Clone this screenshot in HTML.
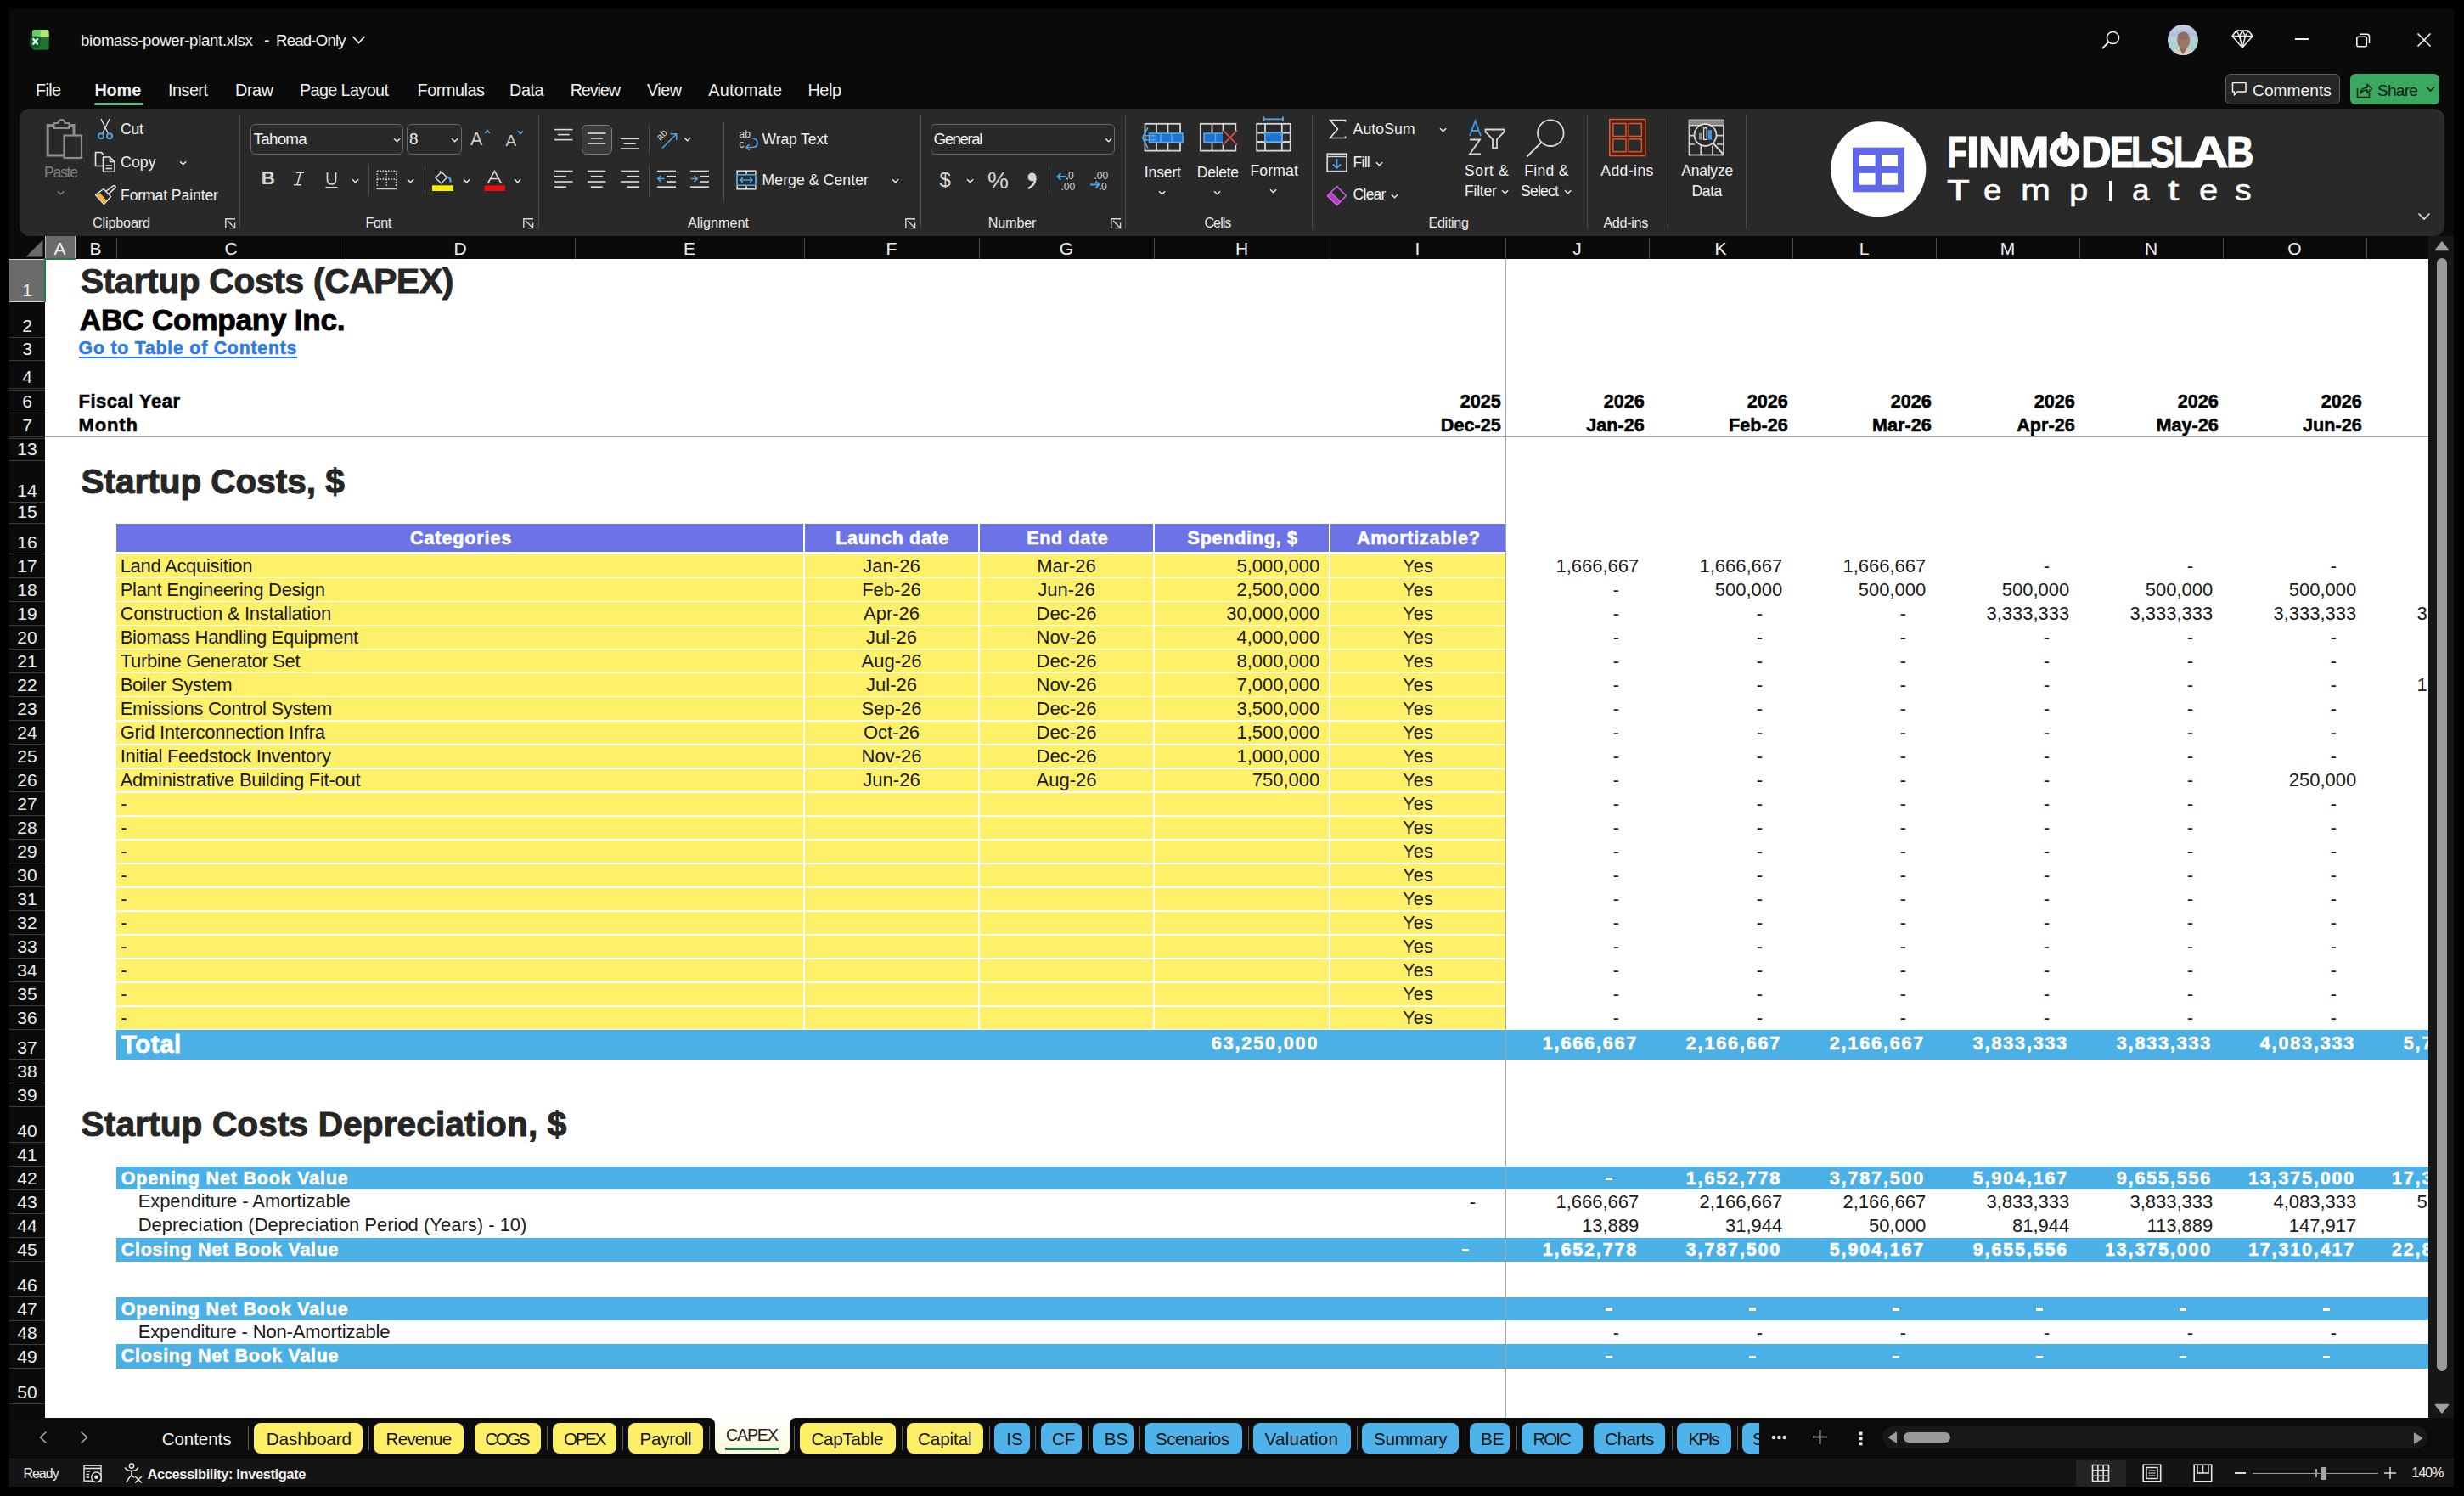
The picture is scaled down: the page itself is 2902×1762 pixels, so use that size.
<!DOCTYPE html><html><head><meta charset="utf-8"><style>
html,body{margin:0;padding:0;width:2902px;height:1762px;overflow:hidden;background:#000;}
body{position:relative;font-family:"Liberation Sans",sans-serif;}
div,svg{position:absolute;box-sizing:border-box;}
.t{white-space:nowrap;}
</style></head><body>
<div style="left:11.00px;top:11.00px;width:2879.00px;height:1740.00px;background:#0a0a0a;"></div>
<svg style="left:34.00px;top:34.00px;" width="26" height="26" viewBox="0 0 26 26">
<defs><clipPath id="xb"><rect x="3.9" y="0.9" width="19.9" height="23.8" rx="3"/></clipPath></defs>
<g clip-path="url(#xb)">
<rect x="3.9" y="0.9" width="20" height="24" fill="#21752f"/>
<rect x="3.9" y="0.9" width="9.4" height="8.6" fill="#62cd60"/>
<rect x="13.3" y="0.9" width="10.5" height="8.6" fill="#b6e772"/>
</g>
<rect x="1.2" y="8.7" width="12.7" height="13" rx="4" fill="#0d5a30"/>
<path d="M4.6 11.3 L10.6 18.4 M10.6 11.3 L4.6 18.4" stroke="#f4fff4" stroke-width="2.4"/>
</svg>
<div class="t" style="left:95.00px;top:38.69px;font-size:18.60px;line-height:18.60px;color:#f2f2f2;letter-spacing:-0.298px;">biomass-power-plant.xlsx</div>
<div class="t" style="left:311.00px;top:37.92px;font-size:19.50px;line-height:19.50px;color:#f2f2f2;">-</div>
<div class="t" style="left:325.00px;top:38.69px;font-size:18.60px;line-height:18.60px;color:#f2f2f2;letter-spacing:-0.776px;">Read-Only</div>
<svg style="left:414.00px;top:41.00px;" width="17" height="12" viewBox="0 0 17 12"><path d="M1.5 2 L8.5 9.5 L15.5 2" fill="none" stroke="#f2f2f2" stroke-width="1.8"/></svg>
<svg style="left:2474.00px;top:35.00px;" width="24" height="24" viewBox="0 0 24 24"><circle cx="14.5" cy="9.5" r="7" fill="none" stroke="#f0f0f0" stroke-width="1.6"/><path d="M9.5 14.5 L2 22" stroke="#f0f0f0" stroke-width="1.8"/></svg>
<svg style="left:2553.00px;top:29.00px;" width="36" height="36" viewBox="0 0 36 36"><defs><clipPath id="av"><circle cx="18" cy="18" r="18"/></clipPath>
<linearGradient id="avg" x1="0" y1="0" x2="0" y2="1"><stop offset="0" stop-color="#c9d2e6"/><stop offset="0.32" stop-color="#aebfd8"/><stop offset="0.42" stop-color="#b4d4d6"/><stop offset="1" stop-color="#a6cfcb"/></linearGradient></defs>
<g clip-path="url(#av)"><rect width="36" height="36" fill="url(#avg)"/>
<path d="M2 36 Q5 29 14 28.5 L22 28.5 Q31 29 34 36 Z" fill="#d6ccc3"/>
<path d="M13.5 28 L18 35 L22.5 28 Z" fill="#8a6a5a"/>
<ellipse cx="18.7" cy="18.5" rx="7.6" ry="10.3" fill="#9d7566"/>
<ellipse cx="18" cy="13.5" rx="6.2" ry="4.5" fill="#8f6d62"/></g></svg>
<svg style="left:2628.00px;top:34.00px;" width="26" height="24" viewBox="0 0 26 24"><path d="M6 2 L20 2 L25 8.5 L13 22 L1 8.5 Z M1 8.5 L25 8.5 M6 2 L9.5 8.5 L13 22 L16.5 8.5 L20 2 M9.5 8.5 L13 2 L16.5 8.5" fill="none" stroke="#f0f0f0" stroke-width="1.5" stroke-linejoin="round"/></svg>
<div style="left:2703.00px;top:45.00px;width:16.00px;height:1.60px;background:#f0f0f0;"></div>
<svg style="left:2774.00px;top:38.00px;" width="19" height="19" viewBox="0 0 19 19"><rect x="1.8" y="5.2" width="11.5" height="11.5" rx="2" fill="none" stroke="#f0f0f0" stroke-width="1.6"/><path d="M5.2 2.2 L13.5 2.2 Q16.5 2.2 16.5 5.2 L16.5 13" fill="none" stroke="#f0f0f0" stroke-width="1.6"/></svg>
<svg style="left:2846.00px;top:38.00px;" width="18" height="18" viewBox="0 0 18 18"><path d="M1.5 1.5 L16.5 16.5 M16.5 1.5 L1.5 16.5" stroke="#f0f0f0" stroke-width="1.7"/></svg>
<div style="left:2621px;top:87px;width:135px;height:36px;border:1px solid #5c5c5c;border-radius:6px;background:#262626"></div>
<svg style="left:2628.00px;top:96.00px;" width="19" height="19" viewBox="0 0 19 19"><path d="M1.5 1.5 H17 V12 H7 L3.5 16 V12 H1.5 Z" fill="none" stroke="#f0f0f0" stroke-width="1.5" stroke-linejoin="round"/></svg>
<div class="t" style="left:2653.00px;top:96.68px;font-size:19.20px;line-height:19.20px;color:#f2f2f2;letter-spacing:0.025px;">Comments</div>
<div style="left:2768px;top:87px;width:105px;height:36px;border-radius:6px;background:#3aa860"></div>
<svg style="left:2775.00px;top:96.00px;" width="20" height="20" viewBox="0 0 20 20"><path d="M1.5 8 V18.5 H15.5 V14" fill="none" stroke="#0d2a17" stroke-width="1.6"/><path d="M5 14 Q6 7 13 7 V3.2 L18.5 8.5 L13 13.6 V10 Q8 10 5 14 Z" fill="none" stroke="#0d2a17" stroke-width="1.5" stroke-linejoin="round"/></svg>
<div class="t" style="left:2800.00px;top:96.68px;font-size:19.20px;line-height:19.20px;color:#0d1f14;letter-spacing:-0.809px;">Share</div>
<svg style="left:2857.00px;top:101.00px;" width="11" height="8" viewBox="0 0 11 8"><path d="M1 1.5 L5.5 6 L10 1.5" fill="none" stroke="#0d1f14" stroke-width="1.6"/></svg>
<div class="t" style="left:42.00px;top:97.07px;font-size:19.80px;line-height:19.80px;color:#f0f0f0;letter-spacing:-0.635px;">File</div>
<div class="t" style="left:111.40px;top:97.07px;font-size:19.80px;line-height:19.80px;color:#f0f0f0;font-weight:bold;letter-spacing:-0.071px;">Home</div>
<div class="t" style="left:198.00px;top:97.07px;font-size:19.80px;line-height:19.80px;color:#f0f0f0;letter-spacing:-0.504px;">Insert</div>
<div class="t" style="left:277.00px;top:97.07px;font-size:19.80px;line-height:19.80px;color:#f0f0f0;letter-spacing:-0.402px;">Draw</div>
<div class="t" style="left:353.00px;top:97.07px;font-size:19.80px;line-height:19.80px;color:#f0f0f0;letter-spacing:-0.619px;">Page Layout</div>
<div class="t" style="left:491.50px;top:97.07px;font-size:19.80px;line-height:19.80px;color:#f0f0f0;letter-spacing:-0.431px;">Formulas</div>
<div class="t" style="left:600.00px;top:97.07px;font-size:19.80px;line-height:19.80px;color:#f0f0f0;letter-spacing:-0.408px;">Data</div>
<div class="t" style="left:671.70px;top:97.07px;font-size:19.80px;line-height:19.80px;color:#f0f0f0;letter-spacing:-1.124px;">Review</div>
<div class="t" style="left:762.00px;top:97.07px;font-size:19.80px;line-height:19.80px;color:#f0f0f0;letter-spacing:-0.520px;">View</div>
<div class="t" style="left:834.30px;top:97.07px;font-size:19.80px;line-height:19.80px;color:#f0f0f0;letter-spacing:0.278px;">Automate</div>
<div class="t" style="left:951.40px;top:97.07px;font-size:19.80px;line-height:19.80px;color:#f0f0f0;letter-spacing:-0.374px;">Help</div>
<div style="left:111px;top:120.5px;width:58px;height:3px;border-radius:2px;background:#5ab77f"></div>
<div style="left:23px;top:128px;width:2856px;height:150px;border-radius:12px;background:#292929"></div>
<div style="left:282.00px;top:135.00px;width:1.00px;height:134.00px;background:#4a4a4a;"></div>
<div style="left:633.50px;top:135.00px;width:1.00px;height:134.00px;background:#4a4a4a;"></div>
<div style="left:1083.50px;top:135.00px;width:1.00px;height:134.00px;background:#4a4a4a;"></div>
<div style="left:1325.30px;top:135.00px;width:1.00px;height:134.00px;background:#4a4a4a;"></div>
<div style="left:1544.60px;top:135.00px;width:1.00px;height:134.00px;background:#4a4a4a;"></div>
<div style="left:1868.50px;top:135.00px;width:1.00px;height:134.00px;background:#4a4a4a;"></div>
<div style="left:1963.50px;top:135.00px;width:1.00px;height:134.00px;background:#4a4a4a;"></div>
<div style="left:2056.40px;top:135.00px;width:1.00px;height:134.00px;background:#4a4a4a;"></div>
<div class="t" style="left:109.00px;top:254.43px;font-size:16.20px;line-height:16.20px;color:#e8e8e8;letter-spacing:-0.168px;">Clipboard</div>
<div class="t" style="left:430.50px;top:254.43px;font-size:16.20px;line-height:16.20px;color:#e8e8e8;letter-spacing:-0.572px;">Font</div>
<div class="t" style="left:810.00px;top:254.43px;font-size:16.20px;line-height:16.20px;color:#e8e8e8;">Alignment</div>
<div class="t" style="left:1163.80px;top:254.43px;font-size:16.20px;line-height:16.20px;color:#e8e8e8;letter-spacing:-0.184px;">Number</div>
<div class="t" style="left:1418.40px;top:254.43px;font-size:16.20px;line-height:16.20px;color:#e8e8e8;letter-spacing:-0.977px;">Cells</div>
<div class="t" style="left:1682.50px;top:254.43px;font-size:16.20px;line-height:16.20px;color:#e8e8e8;letter-spacing:-0.339px;">Editing</div>
<div class="t" style="left:1888.40px;top:254.43px;font-size:16.20px;line-height:16.20px;color:#e8e8e8;letter-spacing:-0.338px;">Add-ins</div>
<svg style="left:264.60px;top:257.00px;" width="13" height="13" viewBox="0 0 13 13"><path d="M0.8 12 V0.8 H12 M3 3 L11.5 11.5 M5.5 11.6 H11.6 V5.5" fill="none" stroke="#d8d8d8" stroke-width="1.4"/></svg>
<svg style="left:616.00px;top:257.00px;" width="13" height="13" viewBox="0 0 13 13"><path d="M0.8 12 V0.8 H12 M3 3 L11.5 11.5 M5.5 11.6 H11.6 V5.5" fill="none" stroke="#d8d8d8" stroke-width="1.4"/></svg>
<svg style="left:1066.00px;top:257.00px;" width="13" height="13" viewBox="0 0 13 13"><path d="M0.8 12 V0.8 H12 M3 3 L11.5 11.5 M5.5 11.6 H11.6 V5.5" fill="none" stroke="#d8d8d8" stroke-width="1.4"/></svg>
<svg style="left:1308.00px;top:257.00px;" width="13" height="13" viewBox="0 0 13 13"><path d="M0.8 12 V0.8 H12 M3 3 L11.5 11.5 M5.5 11.6 H11.6 V5.5" fill="none" stroke="#d8d8d8" stroke-width="1.4"/></svg>
<svg style="left:2847.00px;top:250.00px;" width="16" height="10" viewBox="0 0 16 10"><path d="M1.5 1.5 L8 8 L14.5 1.5" fill="none" stroke="#e0e0e0" stroke-width="1.6"/></svg>
<svg style="left:54.00px;top:140.00px;" width="44" height="48" viewBox="0 0 44 48">
<path d="M9 7.5 H2.2 V43 H21" fill="none" stroke="#8e8e8e" stroke-width="3"/>
<path d="M27 7.5 H33 V19" fill="none" stroke="#8e8e8e" stroke-width="3"/>
<path d="M9.5 11 V5 H14.5 Q15 1.2 18.5 1.2 Q22 1.2 22.5 5 H27.5 V11 Z" fill="none" stroke="#8e8e8e" stroke-width="2.2" stroke-linejoin="round"/>
<rect x="21.5" y="19.5" width="20.5" height="26.5" fill="none" stroke="#8e8e8e" stroke-width="2.2"/>
</svg>
<div class="t" style="left:52.00px;top:194.64px;font-size:17.60px;line-height:17.60px;color:#7f7f7f;letter-spacing:-1.252px;">Paste</div>
<svg style="left:67.00px;top:224.00px;" width="10" height="6.5" viewBox="0 0 10 6.5"><path d="M1 1.2 L4.6 4.8 L8.2 1.2" fill="none" stroke="#7f7f7f" stroke-width="1.5"/></svg>
<svg style="left:114.00px;top:139.00px;" width="20" height="26" viewBox="0 0 20 26">
<path d="M5 1 L13.5 18.5 M15 1 L6.5 18.5" stroke="#e6e6e6" stroke-width="1.3" fill="none"/>
<circle cx="5" cy="21.3" r="3" fill="none" stroke="#4ba3e3" stroke-width="1.9"/>
<circle cx="15" cy="21.3" r="3" fill="none" stroke="#4ba3e3" stroke-width="1.9"/>
</svg>
<div class="t" style="left:142.00px;top:144.04px;font-size:17.60px;line-height:17.60px;color:#f0f0f0;letter-spacing:-0.194px;">Cut</div>
<svg style="left:111.00px;top:178.00px;" width="26" height="26" viewBox="0 0 26 26">
<path d="M10 17.5 H1.5 V1.5 H8.5 L11 4.5" fill="none" stroke="#e6e6e6" stroke-width="1.6" stroke-linejoin="round"/>
<path d="M10.5 24.2 V7 H18.5 L24 12.5 V24.2 Z M18.5 7 V12.5 H24" fill="none" stroke="#e6e6e6" stroke-width="1.6" stroke-linejoin="round"/>
<path d="M13.5 17 H21 M13.5 20.5 H21" stroke="#e6e6e6" stroke-width="1.3"/>
</svg>
<div class="t" style="left:142.00px;top:183.04px;font-size:17.60px;line-height:17.60px;color:#f0f0f0;letter-spacing:0.171px;">Copy</div>
<svg style="left:210.50px;top:189.00px;" width="10" height="6.5" viewBox="0 0 10 6.5"><path d="M1 1.2 L4.6 4.8 L8.2 1.2" fill="none" stroke="#e8e8e8" stroke-width="1.5"/></svg>
<svg style="left:111.00px;top:217.00px;" width="27" height="25" viewBox="0 0 27 25">
<path d="M1.5 12.5 L11 5.5 L19.5 14.5 L11.5 23.5 Z" fill="none" stroke="#e6e6e6" stroke-width="1.4" stroke-linejoin="round"/>
<path d="M2.3 13 L6.5 10 L15 19.5 L11.5 22.8 Z" fill="#f3b436"/>
<path d="M13.5 8.5 L22.5 1.8 Q25 1.2 25.2 3.6 L17 11.5" fill="none" stroke="#e6e6e6" stroke-width="1.5" stroke-linejoin="round"/>
</svg>
<div class="t" style="left:142.00px;top:222.04px;font-size:17.60px;line-height:17.60px;color:#f0f0f0;letter-spacing:-0.108px;">Format Painter</div>
<div style="left:295.3px;top:146.2px;width:180.2px;height:35.5px;border:1px solid #6a6a6a;border-radius:6px;"></div>
<div class="t" style="left:298.50px;top:155.02px;font-size:18.80px;line-height:18.80px;color:#f2f2f2;letter-spacing:-0.717px;">Tahoma</div>
<svg style="left:462.50px;top:161.50px;" width="10" height="6.5" viewBox="0 0 10 6.5"><path d="M1 1.2 L4.6 4.8 L8.2 1.2" fill="none" stroke="#e8e8e8" stroke-width="1.5"/></svg>
<div style="left:479.4px;top:146.2px;width:64.3px;height:35.5px;border:1px solid #6a6a6a;border-radius:6px;"></div>
<div class="t" style="left:482.00px;top:155.02px;font-size:18.80px;line-height:18.80px;color:#f2f2f2;">8</div>
<svg style="left:530.50px;top:161.50px;" width="10" height="6.5" viewBox="0 0 10 6.5"><path d="M1 1.2 L4.6 4.8 L8.2 1.2" fill="none" stroke="#e8e8e8" stroke-width="1.5"/></svg>
<div class="t" style="left:554.00px;top:153.53px;font-size:21.50px;line-height:21.50px;color:#d0d0d0;">A</div>
<svg style="left:569.50px;top:151.50px;" width="8" height="6" viewBox="0 0 8 6"><path d="M1 5 L4 1.5 L7 5" fill="none" stroke="#4ba3e3" stroke-width="1.6"/></svg>
<div class="t" style="left:595.60px;top:155.65px;font-size:19.00px;line-height:19.00px;color:#d0d0d0;">A</div>
<svg style="left:608.50px;top:152.50px;" width="8" height="6" viewBox="0 0 8 6"><path d="M1 1.2 L4 4.6 L7 1.2" fill="none" stroke="#4ba3e3" stroke-width="1.6"/></svg>
<div class="t" style="left:307.80px;top:198.84px;font-size:22.30px;line-height:22.30px;color:#d6d6d6;font-weight:bold;">B</div>
<svg style="left:345.00px;top:201.50px;" width="14" height="17" viewBox="0 0 14 17"><path d="M4 1.2 H13 M1 15.8 H10 M9 1.2 L5 15.8" fill="none" stroke="#d6d6d6" stroke-width="1.6"/></svg>
<svg style="left:382.50px;top:201.50px;" width="15" height="20" viewBox="0 0 15 20"><path d="M2.5 1 V9.5 Q2.5 15 7.5 15 Q12.5 15 12.5 9.5 V1" fill="none" stroke="#d6d6d6" stroke-width="1.7"/><path d="M0.5 18.8 H14.5" stroke="#d6d6d6" stroke-width="1.6"/></svg>
<svg style="left:414.40px;top:209.70px;" width="10" height="6.5" viewBox="0 0 10 6.5"><path d="M1 1.2 L4.6 4.8 L8.2 1.2" fill="none" stroke="#e8e8e8" stroke-width="1.5"/></svg>
<div style="left:434.40px;top:193.70px;width:1.00px;height:36.00px;background:#4a4a4a;"></div>
<svg style="left:443.00px;top:199.50px;" width="25" height="24" viewBox="0 0 25 24">
<path d="M1.2 1.2 H23.5 V20 M1.2 1.2 V20 M12.3 1.2 V20 M1.2 11 H23.5" fill="none" stroke="#d6d6d6" stroke-width="1.5" stroke-dasharray="1.6 1.6"/>
<path d="M0.5 22.3 H24" stroke="#d6d6d6" stroke-width="1.8"/>
</svg>
<svg style="left:479.40px;top:209.70px;" width="10" height="6.5" viewBox="0 0 10 6.5"><path d="M1 1.2 L4.6 4.8 L8.2 1.2" fill="none" stroke="#e8e8e8" stroke-width="1.5"/></svg>
<div style="left:499.50px;top:193.70px;width:1.00px;height:36.00px;background:#4a4a4a;"></div>
<svg style="left:508.50px;top:199.50px;" width="26" height="25.5" viewBox="0 0 26 25.5">
<path d="M4 9.5 L11 2.5 L17.5 9 L10.5 16 Z" fill="none" stroke="#d6d6d6" stroke-width="1.5" stroke-linejoin="round"/>
<path d="M9.5 5 V1" stroke="#d6d6d6" stroke-width="1.4"/>
<path d="M18 8 Q22 9.5 21.5 14.5" fill="none" stroke="#4ba3e3" stroke-width="2.4"/>
<rect x="0" y="18.3" width="25" height="6.7" fill="#f5ee00"/>
</svg>
<svg style="left:544.50px;top:209.70px;" width="10" height="6.5" viewBox="0 0 10 6.5"><path d="M1 1.2 L4.6 4.8 L8.2 1.2" fill="none" stroke="#e8e8e8" stroke-width="1.5"/></svg>
<svg style="left:569.50px;top:199.50px;" width="26" height="25.5" viewBox="0 0 26 25.5">
<path d="M4.5 16 L12.5 1.5 L20.5 16 M7.5 10.5 H17.5" fill="none" stroke="#d6d6d6" stroke-width="1.6"/>
<rect x="0.5" y="18.3" width="24.5" height="6.7" fill="#ec0c0c"/>
</svg>
<svg style="left:605.00px;top:209.70px;" width="10" height="6.5" viewBox="0 0 10 6.5"><path d="M1 1.2 L4.6 4.8 L8.2 1.2" fill="none" stroke="#e8e8e8" stroke-width="1.5"/></svg>
<svg style="left:653.30px;top:0.00px;pointer-events:none" width="23" height="260" viewBox="0 0 23 260"><rect x="0.00" y="151.80" width="21.50" height="1.6" fill="#dcdcdc"/><rect x="3.75" y="157.80" width="14.00" height="1.6" fill="#dcdcdc"/><rect x="0.00" y="163.80" width="21.50" height="1.6" fill="#dcdcdc"/></svg>
<div style="left:685.4px;top:146.5px;width:35.5px;height:35.1px;border:1px solid #7c7c7c;border-radius:6px;background:#3b3b3b"></div>
<svg style="left:692.00px;top:0.00px;pointer-events:none" width="23" height="260" viewBox="0 0 23 260"><rect x="0.00" y="156.20" width="21.50" height="1.6" fill="#dcdcdc"/><rect x="3.75" y="162.20" width="14.00" height="1.6" fill="#dcdcdc"/><rect x="0.00" y="168.20" width="21.50" height="1.6" fill="#dcdcdc"/></svg>
<svg style="left:730.80px;top:0.00px;pointer-events:none" width="23" height="260" viewBox="0 0 23 260"><rect x="0.00" y="162.50" width="21.50" height="1.6" fill="#dcdcdc"/><rect x="3.75" y="168.40" width="14.00" height="1.6" fill="#dcdcdc"/><rect x="0.00" y="174.20" width="21.50" height="1.6" fill="#dcdcdc"/></svg>
<div style="left:763.50px;top:146.50px;width:1.00px;height:35.50px;background:#4a4a4a;"></div>
<svg style="left:772.00px;top:151.00px;" width="28" height="25" viewBox="0 0 28 25">
<text x="0" y="0" transform="translate(5.5,15) rotate(-45)" font-family="Liberation Sans" font-size="11.5" fill="#d6d6d6">ab</text>
<path d="M8 23.5 L24.5 7" stroke="#4ba3e3" stroke-width="1.6"/>
<path d="M17.5 6.8 H24.8 V14" fill="none" stroke="#4ba3e3" stroke-width="1.6"/>
</svg>
<svg style="left:805.30px;top:161.40px;" width="10" height="6.5" viewBox="0 0 10 6.5"><path d="M1 1.2 L4.6 4.8 L8.2 1.2" fill="none" stroke="#e8e8e8" stroke-width="1.5"/></svg>
<svg style="left:653.30px;top:0.00px;pointer-events:none" width="23" height="260" viewBox="0 0 23 260"><rect x="0.00" y="200.70" width="21.50" height="1.6" fill="#dcdcdc"/><rect x="0.00" y="206.90" width="14.00" height="1.6" fill="#dcdcdc"/><rect x="0.00" y="213.20" width="21.50" height="1.6" fill="#dcdcdc"/><rect x="0.00" y="219.40" width="14.00" height="1.6" fill="#dcdcdc"/></svg>
<svg style="left:692.00px;top:0.00px;pointer-events:none" width="23" height="260" viewBox="0 0 23 260"><rect x="0.00" y="200.70" width="21.50" height="1.6" fill="#dcdcdc"/><rect x="3.75" y="206.90" width="14.00" height="1.6" fill="#dcdcdc"/><rect x="0.00" y="213.20" width="21.50" height="1.6" fill="#dcdcdc"/><rect x="3.75" y="219.40" width="14.00" height="1.6" fill="#dcdcdc"/></svg>
<svg style="left:730.80px;top:0.00px;pointer-events:none" width="23" height="260" viewBox="0 0 23 260"><rect x="0.00" y="200.70" width="21.50" height="1.6" fill="#dcdcdc"/><rect x="7.50" y="206.90" width="14.00" height="1.6" fill="#dcdcdc"/><rect x="0.00" y="213.20" width="21.50" height="1.6" fill="#dcdcdc"/><rect x="7.50" y="219.40" width="14.00" height="1.6" fill="#dcdcdc"/></svg>
<div style="left:763.50px;top:194.00px;width:1.00px;height:36.50px;background:#4a4a4a;"></div>
<svg style="left:773.00px;top:199.00px;" width="24" height="24" viewBox="0 0 24 24">
<rect x="1" y="1.7" width="22" height="1.6" fill="#dcdcdc"/><rect x="12" y="7.9" width="11" height="1.6" fill="#dcdcdc"/>
<rect x="12" y="14.2" width="11" height="1.6" fill="#dcdcdc"/><rect x="1" y="20.4" width="22" height="1.6" fill="#dcdcdc"/>
<path d="M2 11.5 H9.5 M5.5 7.8 L1.8 11.5 L5.5 15.2" fill="none" stroke="#4ba3e3" stroke-width="1.7"/>
</svg>
<svg style="left:812.00px;top:199.00px;" width="24" height="24" viewBox="0 0 24 24">
<rect x="1" y="1.7" width="22" height="1.6" fill="#dcdcdc"/><rect x="12" y="7.9" width="11" height="1.6" fill="#dcdcdc"/>
<rect x="12" y="14.2" width="11" height="1.6" fill="#dcdcdc"/><rect x="1" y="20.4" width="22" height="1.6" fill="#dcdcdc"/>
<path d="M1.5 11.5 H9 M5.5 7.8 L9.2 11.5 L5.5 15.2" fill="none" stroke="#4ba3e3" stroke-width="1.7"/>
</svg>
<div style="left:851.60px;top:143.70px;width:1.00px;height:94.30px;background:#4a4a4a;"></div>
<svg style="left:869.50px;top:152.00px;" width="24" height="25" viewBox="0 0 24 25">
<text x="0.5" y="10" font-family="Liberation Sans" font-size="12" fill="#d6d6d6">ab</text>
<text x="0.5" y="22" font-family="Liberation Sans" font-size="12" fill="#d6d6d6">c</text>
<path d="M16 11 Q22 11 22 16.5 Q22 21.5 16 21.5 H9" fill="none" stroke="#4ba3e3" stroke-width="1.7"/>
<path d="M12.5 18 L9 21.5 L12.5 25" fill="none" stroke="#4ba3e3" stroke-width="1.7"/>
</svg>
<div class="t" style="left:897.50px;top:155.74px;font-size:17.60px;line-height:17.60px;color:#f0f0f0;letter-spacing:-0.135px;">Wrap Text</div>
<svg style="left:866.50px;top:199.50px;" width="24" height="24" viewBox="0 0 24 24">
<rect x="1.2" y="1.2" width="21.6" height="21.6" fill="none" stroke="#d6d6d6" stroke-width="1.6"/>
<path d="M12 1.2 V5.5 M12 18.5 V22.8" stroke="#d6d6d6" stroke-width="1.6"/>
<rect x="1.2" y="5.8" width="21.6" height="12.4" fill="none" stroke="#4ba3e3" stroke-width="1.6"/>
<path d="M5 12 H19 M8 9 L5 12 L8 15 M16 9 L19 12 L16 15" fill="none" stroke="#4ba3e3" stroke-width="1.5"/>
</svg>
<div class="t" style="left:897.50px;top:204.34px;font-size:17.60px;line-height:17.60px;color:#f0f0f0;letter-spacing:0.097px;">Merge &amp; Center</div>
<svg style="left:1049.50px;top:210.00px;" width="10" height="6.5" viewBox="0 0 10 6.5"><path d="M1 1.2 L4.6 4.8 L8.2 1.2" fill="none" stroke="#e8e8e8" stroke-width="1.5"/></svg>
<div style="left:1096.4px;top:146.4px;width:217.1px;height:35.3px;border:1px solid #6a6a6a;border-radius:6px;"></div>
<div class="t" style="left:1099.60px;top:155.02px;font-size:18.80px;line-height:18.80px;color:#f2f2f2;letter-spacing:-1.514px;">General</div>
<svg style="left:1300.50px;top:161.50px;" width="10" height="6.5" viewBox="0 0 10 6.5"><path d="M1 1.2 L4.6 4.8 L8.2 1.2" fill="none" stroke="#e8e8e8" stroke-width="1.5"/></svg>
<div class="t" style="left:1106.50px;top:200.10px;font-size:24.00px;line-height:24.00px;color:#d6d6d6;">$</div>
<svg style="left:1138.00px;top:210.00px;" width="10" height="6.5" viewBox="0 0 10 6.5"><path d="M1 1.2 L4.6 4.8 L8.2 1.2" fill="none" stroke="#e8e8e8" stroke-width="1.5"/></svg>
<div class="t" style="left:1163.00px;top:199.10px;font-size:28.00px;line-height:28.00px;color:#d6d6d6;">%</div>
<svg style="left:1208.00px;top:202.00px;" width="14" height="21" viewBox="0 0 14 21"><circle cx="7.5" cy="6.5" r="5" fill="#d6d6d6"/><path d="M11.5 8 Q11 16 3 20" fill="none" stroke="#d6d6d6" stroke-width="2.6"/></svg>
<div style="left:1235.40px;top:193.50px;width:1.00px;height:36.50px;background:#4a4a4a;"></div>
<svg style="left:1244.00px;top:199.50px;" width="26" height="25" viewBox="0 0 26 25">
<path d="M1.5 8 H12 M5.5 4 L1.5 8 L5.5 12" fill="none" stroke="#4ba3e3" stroke-width="1.8"/>
<text x="14" y="11" font-family="Liberation Sans" font-size="12" fill="#d6d6d6">0</text>
<text x="5.5" y="23.5" font-family="Liberation Sans" font-size="12" fill="#d6d6d6">.00</text>
<circle cx="13" cy="10.5" r="1" fill="#d6d6d6"/>
</svg>
<svg style="left:1282.50px;top:199.50px;" width="26" height="25" viewBox="0 0 26 25">
<text x="5.5" y="11" font-family="Liberation Sans" font-size="12" fill="#d6d6d6">.00</text>
<path d="M1 17.5 H11.5 M7.5 13.5 L11.5 17.5 L7.5 21.5" fill="none" stroke="#4ba3e3" stroke-width="1.8"/>
<text x="14" y="23.5" font-family="Liberation Sans" font-size="12" fill="#d6d6d6">0</text>
<circle cx="13" cy="22.5" r="1" fill="#d6d6d6"/>
</svg>
<svg style="left:1343.00px;top:144.00px;" width="52" height="36" viewBox="0 0 52 36">
<rect x="5.5" y="1.8" width="41.5" height="31.8" fill="none" stroke="#d8d8d8" stroke-width="1.8"/>
<path d="M19 1.8 V33.6 M32.5 1.8 V33.6" stroke="#d8d8d8" stroke-width="1.8"/>
<rect x="10.5" y="13" width="39.5" height="10.5" fill="#1f73cf" stroke="#53a9f0" stroke-width="1.6"/>
<path d="M24 13 V23.5 M37 13 V23.5" stroke="#53a9f0" stroke-width="1.4"/>
<path d="M9 6 L2.5 18.2 L9 30.5 M3 15.8 H18 M3 20.7 H18" fill="none" stroke="#53a9f0" stroke-width="1.6"/>
</svg>
<div class="t" style="left:1347.80px;top:195.04px;font-size:17.60px;line-height:17.60px;color:#f0f0f0;letter-spacing:-0.164px;">Insert</div>
<svg style="left:1363.50px;top:224.00px;" width="10" height="6.5" viewBox="0 0 10 6.5"><path d="M1 1.2 L4.6 4.8 L8.2 1.2" fill="none" stroke="#e8e8e8" stroke-width="1.5"/></svg>
<svg style="left:1411.00px;top:144.00px;" width="48" height="36" viewBox="0 0 48 36">
<rect x="2.8" y="1.8" width="41.5" height="31.8" fill="none" stroke="#d8d8d8" stroke-width="1.8"/>
<path d="M16.5 1.8 V33.6 M29.5 1.8 V33.6" stroke="#d8d8d8" stroke-width="1.8"/>
<path d="M7 13 H32 L37 18.2 L32 23.5 H7 Z" fill="#1f73cf" stroke="#53a9f0" stroke-width="1.6"/>
<path d="M20.5 13 V23.5" stroke="#53a9f0" stroke-width="1.4"/>
<rect x="29" y="10" width="17" height="17" fill="#2b2b2b"/>
<path d="M29.5 9.5 L46 26.5 M46 9.5 L29.5 26.5" stroke="#e8504f" stroke-width="1.7"/>
</svg>
<div class="t" style="left:1409.80px;top:195.04px;font-size:17.60px;line-height:17.60px;color:#f0f0f0;letter-spacing:-0.335px;">Delete</div>
<svg style="left:1428.80px;top:224.00px;" width="10" height="6.5" viewBox="0 0 10 6.5"><path d="M1 1.2 L4.6 4.8 L8.2 1.2" fill="none" stroke="#e8e8e8" stroke-width="1.5"/></svg>
<svg style="left:1478.00px;top:136.00px;" width="44" height="44" viewBox="0 0 44 44">
<rect x="2.2" y="9.8" width="39.5" height="31.8" fill="none" stroke="#d8d8d8" stroke-width="1.8"/>
<path d="M12 9.8 V41.6 M31.8 9.8 V41.6 M2.2 20.5 H41.7 M2.2 31 H41.7" stroke="#d8d8d8" stroke-width="1.8"/>
<rect x="12" y="20.5" width="19.8" height="10.5" fill="#1f73cf" stroke="#53a9f0" stroke-width="1.6"/>
<path d="M10.5 4.3 H33 M10.5 1.5 V7 M33 1.5 V7" stroke="#53a9f0" stroke-width="1.8"/>
</svg>
<div class="t" style="left:1472.40px;top:193.04px;font-size:17.60px;line-height:17.60px;color:#f0f0f0;letter-spacing:0.172px;">Format</div>
<svg style="left:1495.00px;top:222.00px;" width="10" height="6.5" viewBox="0 0 10 6.5"><path d="M1 1.2 L4.6 4.8 L8.2 1.2" fill="none" stroke="#e8e8e8" stroke-width="1.5"/></svg>
<svg style="left:1565.00px;top:140.00px;" width="21" height="24" viewBox="0 0 21 24"><path d="M19.5 3.5 V1.5 H1.5 L10.5 12 L1.5 22.5 H19.5 V20.5" fill="none" stroke="#e0e0e0" stroke-width="1.7" stroke-linejoin="miter"/></svg>
<div class="t" style="left:1593.60px;top:144.04px;font-size:17.60px;line-height:17.60px;color:#f0f0f0;letter-spacing:0.101px;">AutoSum</div>
<svg style="left:1694.50px;top:150.00px;" width="10" height="6.5" viewBox="0 0 10 6.5"><path d="M1 1.2 L4.6 4.8 L8.2 1.2" fill="none" stroke="#e8e8e8" stroke-width="1.5"/></svg>
<svg style="left:1562.00px;top:179.50px;" width="26" height="23" viewBox="0 0 26 23">
<rect x="1.2" y="1.2" width="22.8" height="20.5" fill="none" stroke="#d6d6d6" stroke-width="1.7"/>
<path d="M1.2 4.5 H24" stroke="#d6d6d6" stroke-width="1.4"/>
<path d="M12.5 7 V17.5 M8 13.5 L12.5 18 L17 13.5" fill="none" stroke="#4ba3e3" stroke-width="1.8"/>
</svg>
<div class="t" style="left:1593.60px;top:183.04px;font-size:17.60px;line-height:17.60px;color:#f0f0f0;letter-spacing:-0.794px;">Fill</div>
<svg style="left:1619.80px;top:189.50px;" width="10" height="6.5" viewBox="0 0 10 6.5"><path d="M1 1.2 L4.6 4.8 L8.2 1.2" fill="none" stroke="#e8e8e8" stroke-width="1.5"/></svg>
<svg style="left:1562.00px;top:217.50px;" width="26" height="25" viewBox="0 0 26 25">
<path d="M1.5 12.5 L12.5 1.5 L23.5 12.5 L12.5 23.5 Z" fill="none" stroke="#c561d1" stroke-width="1.7" stroke-linejoin="round"/>
<path d="M1.5 12.5 L5.5 8.5 L16.5 19.5 L12.5 23.5 Z" fill="#b43cc4" stroke="#c561d1" stroke-width="1.5" stroke-linejoin="round"/>
</svg>
<div class="t" style="left:1593.60px;top:221.44px;font-size:17.60px;line-height:17.60px;color:#f0f0f0;letter-spacing:-0.790px;">Clear</div>
<svg style="left:1638.30px;top:228.00px;" width="10" height="6.5" viewBox="0 0 10 6.5"><path d="M1 1.2 L4.6 4.8 L8.2 1.2" fill="none" stroke="#e8e8e8" stroke-width="1.5"/></svg>
<svg style="left:1728.00px;top:140.00px;" width="46" height="44" viewBox="0 0 46 44">
<path d="M3 20 L9.5 2.5 L16 20 M5.3 14 H13.7" fill="none" stroke="#3d98df" stroke-width="1.9"/>
<path d="M3 24.5 H15 L3 41.5 H16" fill="none" stroke="#d8d8d8" stroke-width="1.9"/>
<path d="M21.5 12.5 H43.5 V15.5 L35 24 V34.5 H30 V24 L21.5 15.5 Z" fill="none" stroke="#d8d8d8" stroke-width="1.8" stroke-linejoin="miter"/>
</svg>
<div class="t" style="left:1725.00px;top:193.44px;font-size:17.60px;line-height:17.60px;color:#f0f0f0;letter-spacing:0.578px;">Sort &amp;</div>
<div class="t" style="left:1725.00px;top:217.04px;font-size:17.60px;line-height:17.60px;color:#f0f0f0;letter-spacing:-0.262px;">Filter</div>
<svg style="left:1768.00px;top:223.00px;" width="10" height="6.5" viewBox="0 0 10 6.5"><path d="M1 1.2 L4.6 4.8 L8.2 1.2" fill="none" stroke="#e8e8e8" stroke-width="1.5"/></svg>
<svg style="left:1796.00px;top:139.00px;" width="48" height="48" viewBox="0 0 48 48"><circle cx="30.3" cy="17.7" r="15.3" fill="none" stroke="#d8d8d8" stroke-width="1.8"/><path d="M19.5 28.5 L2.5 45.5" stroke="#d8d8d8" stroke-width="1.9"/></svg>
<div class="t" style="left:1795.20px;top:192.84px;font-size:17.60px;line-height:17.60px;color:#f0f0f0;letter-spacing:0.306px;">Find &amp;</div>
<div class="t" style="left:1791.00px;top:217.04px;font-size:17.60px;line-height:17.60px;color:#f0f0f0;letter-spacing:-0.783px;">Select</div>
<svg style="left:1842.00px;top:223.00px;" width="10" height="6.5" viewBox="0 0 10 6.5"><path d="M1 1.2 L4.6 4.8 L8.2 1.2" fill="none" stroke="#e8e8e8" stroke-width="1.5"/></svg>
<svg style="left:1893.50px;top:139.00px;" width="45" height="46" viewBox="0 0 45 46">
<rect x="1.8" y="1.5" width="42" height="43" fill="#4c1d10" stroke="#d5582f" stroke-width="1.6"/>
<rect x="5.8" y="6.5" width="15.2" height="14.9" fill="#2a2a2a" stroke="#d5582f" stroke-width="1.5"/><rect x="24.1" y="6.5" width="15.2" height="14.9" fill="#2a2a2a" stroke="#d5582f" stroke-width="1.5"/><rect x="5.8" y="24.8" width="15.2" height="14.9" fill="#2a2a2a" stroke="#d5582f" stroke-width="1.5"/><rect x="24.1" y="24.8" width="15.2" height="14.9" fill="#2a2a2a" stroke="#d5582f" stroke-width="1.5"/>
</svg>
<div class="t" style="left:1885.30px;top:192.84px;font-size:17.60px;line-height:17.60px;color:#f0f0f0;letter-spacing:0.404px;">Add-ins</div>
<svg style="left:1988.00px;top:140.00px;" width="44" height="44" viewBox="0 0 44 44">
<rect x="1.5" y="1.5" width="40.5" height="41" fill="none" stroke="#cfcfcf" stroke-width="1.8"/>
<rect x="1.5" y="1.5" width="40.5" height="5.2" fill="#8a8a8a"/>
<path d="M1.5 7.6 H42 M1.5 19.7 H8 M34 19.7 H42 M1.5 30 H8 M34 30 H42 M15.2 31.4 V42 M29 31.4 V42" stroke="#cfcfcf" stroke-width="1.7"/>
<circle cx="20.5" cy="19" r="13" fill="#2b2b2b" stroke="#d6d6d6" stroke-width="1.8"/>
<rect x="13" y="16.6" width="4" height="8" fill="#8c8c8c"/>
<rect x="18.6" y="10.8" width="3.6" height="13.6" fill="none" stroke="#e0e0e0" stroke-width="1.3"/>
<rect x="23.5" y="13" width="4.5" height="11.5" fill="#3d8fdc"/>
<path d="M29.5 28.5 L41.5 41.5" stroke="#d6d6d6" stroke-width="2"/>
</svg>
<div class="t" style="left:1980.30px;top:192.84px;font-size:17.60px;line-height:17.60px;color:#f0f0f0;letter-spacing:-0.286px;">Analyze</div>
<div class="t" style="left:1992.50px;top:217.04px;font-size:17.60px;line-height:17.60px;color:#f0f0f0;letter-spacing:-0.426px;">Data</div>
<svg style="left:2156.00px;top:142.50px;" width="113" height="113" viewBox="0 0 113 113">
<circle cx="56.3" cy="56.3" r="56" fill="#ffffff"/>
<rect x="26" y="30.7" width="61" height="52.6" fill="#5f67e8"/>
<rect x="34" y="39" width="18.6" height="13.8" fill="#fff"/>
<rect x="60" y="39" width="19" height="13.8" fill="#fff"/>
<rect x="34" y="60.9" width="18.6" height="13.8" fill="#fff"/>
<rect x="60" y="60.9" width="19" height="13.8" fill="#fff"/>
</svg>
<div class="t" style="left:2293.71px;top:154.14px;font-size:51.01px;line-height:51.01px;color:#ffffff;font-weight:bold;-webkit-text-stroke:1.2px #fff;transform:scaleX(0.7276);transform-origin:0 0;">F</div>
<div class="t" style="left:2315.96px;top:154.14px;font-size:51.01px;line-height:51.01px;color:#ffffff;font-weight:bold;-webkit-text-stroke:1.2px #fff;transform:scaleX(1.0502);transform-origin:0 0;">I</div>
<div class="t" style="left:2330.18px;top:154.14px;font-size:51.01px;line-height:51.01px;color:#ffffff;font-weight:bold;-webkit-text-stroke:1.2px #fff;transform:scaleX(1.0163);transform-origin:0 0;">N</div>
<div class="t" style="left:2364.58px;top:154.14px;font-size:51.01px;line-height:51.01px;color:#ffffff;font-weight:bold;-webkit-text-stroke:1.2px #fff;transform:scaleX(1.1492);transform-origin:0 0;">M</div>
<div class="t" style="left:2450.50px;top:154.14px;font-size:51.01px;line-height:51.01px;color:#ffffff;font-weight:bold;-webkit-text-stroke:1.2px #fff;transform:scaleX(0.9689);transform-origin:0 0;">D</div>
<div class="t" style="left:2484.75px;top:154.14px;font-size:51.01px;line-height:51.01px;color:#ffffff;font-weight:bold;-webkit-text-stroke:1.2px #fff;transform:scaleX(0.8201);transform-origin:0 0;">E</div>
<div class="t" style="left:2510.49px;top:154.14px;font-size:51.01px;line-height:51.01px;color:#ffffff;font-weight:bold;-webkit-text-stroke:1.2px #fff;transform:scaleX(0.7836);transform-origin:0 0;">L</div>
<div class="t" style="left:2531.98px;top:154.14px;font-size:51.01px;line-height:51.01px;color:#ffffff;font-weight:bold;-webkit-text-stroke:1.2px #fff;transform:scaleX(0.8474);transform-origin:0 0;">S</div>
<div class="t" style="left:2560.03px;top:154.14px;font-size:51.01px;line-height:51.01px;color:#ffffff;font-weight:bold;-webkit-text-stroke:1.2px #fff;transform:scaleX(0.8097);transform-origin:0 0;">L</div>
<div class="t" style="left:2581.25px;top:154.14px;font-size:51.01px;line-height:51.01px;color:#ffffff;font-weight:bold;-webkit-text-stroke:1.2px #fff;transform:scaleX(1.1836);transform-origin:0 0;">A</div>
<div class="t" style="left:2621.73px;top:154.14px;font-size:51.01px;line-height:51.01px;color:#ffffff;font-weight:bold;-webkit-text-stroke:1.2px #fff;transform:scaleX(0.8806);transform-origin:0 0;">B</div>
<svg style="left:2410.00px;top:150.00px;" width="44" height="52" viewBox="0 0 44 52">
<path d="M 25.5 16.5 A 13.2 13.2 0 1 1 17.5 16.5" fill="none" stroke="#fff" stroke-width="9"/>
<rect x="16.6" y="4.8" width="9" height="27" rx="4.5" fill="#fff"/>
</svg>
<div class="t" style="left:2293.16px;top:207.28px;font-size:34.50px;line-height:34.50px;color:#ffffff;-webkit-text-stroke:0.5px #fff;transform:scaleX(1.2710);transform-origin:0 0;">T</div>
<div class="t" style="left:2336.29px;top:207.28px;font-size:34.50px;line-height:34.50px;color:#ffffff;-webkit-text-stroke:0.5px #fff;transform:scaleX(1.1168);transform-origin:0 0;">e</div>
<div class="t" style="left:2379.51px;top:207.28px;font-size:34.50px;line-height:34.50px;color:#ffffff;-webkit-text-stroke:0.5px #fff;transform:scaleX(1.2137);transform-origin:0 0;">m</div>
<div class="t" style="left:2436.92px;top:207.28px;font-size:34.50px;line-height:34.50px;color:#ffffff;-webkit-text-stroke:0.5px #fff;transform:scaleX(1.1602);transform-origin:0 0;">p</div>
<div style="left:2483.70px;top:212.60px;width:3.00px;height:24.00px;background:#ffffff;"></div>
<div class="t" style="left:2510.55px;top:207.28px;font-size:34.50px;line-height:34.50px;color:#ffffff;-webkit-text-stroke:0.5px #fff;transform:scaleX(1.0733);transform-origin:0 0;">a</div>
<div class="t" style="left:2553.23px;top:207.28px;font-size:34.50px;line-height:34.50px;color:#ffffff;-webkit-text-stroke:0.5px #fff;transform:scaleX(1.3911);transform-origin:0 0;">t</div>
<div class="t" style="left:2590.02px;top:207.28px;font-size:34.50px;line-height:34.50px;color:#ffffff;-webkit-text-stroke:0.5px #fff;transform:scaleX(1.1602);transform-origin:0 0;">e</div>
<div class="t" style="left:2632.22px;top:207.28px;font-size:34.50px;line-height:34.50px;color:#ffffff;-webkit-text-stroke:0.5px #fff;transform:scaleX(1.1456);transform-origin:0 0;">s</div>
<div style="left:11px;top:278px;width:2849px;height:1392px;overflow:hidden;">
</div>
<svg style="left:30.00px;top:282.00px;" width="21" height="21" viewBox="0 0 21 21"><path d="M20.5 0.5 V20.5 H0.5 Z" fill="#6a6a6a"/></svg>
<div style="left:53.00px;top:278.00px;width:35.00px;height:27.00px;background:#6b6b6b;"></div>
<div class="t" style="left:63.50px;top:282.15px;font-size:21.00px;line-height:21.00px;color:#eeeeee;">A</div>
<div style="left:88.00px;top:280.00px;width:1.00px;height:25.00px;background:#4a4a4a;"></div>
<div class="t" style="left:105.50px;top:282.15px;font-size:21.00px;line-height:21.00px;color:#eeeeee;">B</div>
<div style="left:137.00px;top:280.00px;width:1.00px;height:25.00px;background:#4a4a4a;"></div>
<div class="t" style="left:264.42px;top:282.15px;font-size:21.00px;line-height:21.00px;color:#eeeeee;">C</div>
<div style="left:407.00px;top:280.00px;width:1.00px;height:25.00px;background:#4a4a4a;"></div>
<div class="t" style="left:534.42px;top:282.15px;font-size:21.00px;line-height:21.00px;color:#eeeeee;">D</div>
<div style="left:677.00px;top:280.00px;width:1.00px;height:25.00px;background:#4a4a4a;"></div>
<div class="t" style="left:805.00px;top:282.15px;font-size:21.00px;line-height:21.00px;color:#eeeeee;">E</div>
<div style="left:947.00px;top:280.00px;width:1.00px;height:25.00px;background:#4a4a4a;"></div>
<div class="t" style="left:1043.59px;top:282.15px;font-size:21.00px;line-height:21.00px;color:#eeeeee;">F</div>
<div style="left:1153.00px;top:280.00px;width:1.00px;height:25.00px;background:#4a4a4a;"></div>
<div class="t" style="left:1247.83px;top:282.15px;font-size:21.00px;line-height:21.00px;color:#eeeeee;">G</div>
<div style="left:1359.00px;top:280.00px;width:1.00px;height:25.00px;background:#4a4a4a;"></div>
<div class="t" style="left:1454.92px;top:282.15px;font-size:21.00px;line-height:21.00px;color:#eeeeee;">H</div>
<div style="left:1566.00px;top:280.00px;width:1.00px;height:25.00px;background:#4a4a4a;"></div>
<div class="t" style="left:1666.58px;top:282.15px;font-size:21.00px;line-height:21.00px;color:#eeeeee;">I</div>
<div style="left:1773.00px;top:280.00px;width:1.00px;height:25.00px;background:#4a4a4a;"></div>
<div class="t" style="left:1852.25px;top:282.15px;font-size:21.00px;line-height:21.00px;color:#eeeeee;">J</div>
<div style="left:1942.00px;top:280.00px;width:1.00px;height:25.00px;background:#4a4a4a;"></div>
<div class="t" style="left:2019.50px;top:282.15px;font-size:21.00px;line-height:21.00px;color:#eeeeee;">K</div>
<div style="left:2111.00px;top:280.00px;width:1.00px;height:25.00px;background:#4a4a4a;"></div>
<div class="t" style="left:2189.66px;top:282.15px;font-size:21.00px;line-height:21.00px;color:#eeeeee;">L</div>
<div style="left:2280.00px;top:280.00px;width:1.00px;height:25.00px;background:#4a4a4a;"></div>
<div class="t" style="left:2355.75px;top:282.15px;font-size:21.00px;line-height:21.00px;color:#eeeeee;">M</div>
<div style="left:2449.00px;top:280.00px;width:1.00px;height:25.00px;background:#4a4a4a;"></div>
<div class="t" style="left:2525.92px;top:282.15px;font-size:21.00px;line-height:21.00px;color:#eeeeee;">N</div>
<div style="left:2618.00px;top:280.00px;width:1.00px;height:25.00px;background:#4a4a4a;"></div>
<div class="t" style="left:2694.33px;top:282.15px;font-size:21.00px;line-height:21.00px;color:#eeeeee;">O</div>
<div style="left:2787.00px;top:280.00px;width:1.00px;height:25.00px;background:#4a4a4a;"></div>
<div style="left:53.00px;top:278.00px;width:1.00px;height:27.00px;background:#bdbdbd;"></div>
<div style="left:87.50px;top:278.00px;width:1.00px;height:27.00px;background:#bdbdbd;"></div>
<div style="left:53.00px;top:305.00px;width:2807.00px;height:1365.00px;background:#ffffff;"></div>
<div style="left:11.00px;top:305.00px;width:42.00px;height:50.00px;background:#6b6b6b;"></div>
<div style="left:11.00px;top:354.50px;width:42.00px;height:1.00px;background:#cfcfcf;"></div>
<div class="t" style="left:26.16px;top:330.65px;font-size:21.00px;line-height:21.00px;color:#eeeeee;">1</div>
<div style="left:11.00px;top:396.50px;width:42.00px;height:1.00px;background:#3c3c3c;"></div>
<div class="t" style="left:26.16px;top:372.65px;font-size:21.00px;line-height:21.00px;color:#eeeeee;">2</div>
<div style="left:11.00px;top:424.00px;width:42.00px;height:1.00px;background:#3c3c3c;"></div>
<div class="t" style="left:26.16px;top:400.15px;font-size:21.00px;line-height:21.00px;color:#eeeeee;">3</div>
<div style="left:11.00px;top:456.50px;width:42.00px;height:1.00px;background:#3c3c3c;"></div>
<div class="t" style="left:26.16px;top:432.65px;font-size:21.00px;line-height:21.00px;color:#eeeeee;">4</div>
<div style="left:11.00px;top:485.50px;width:42.00px;height:1.00px;background:#3c3c3c;"></div>
<div class="t" style="left:26.16px;top:461.65px;font-size:21.00px;line-height:21.00px;color:#eeeeee;">6</div>
<div style="left:11.00px;top:513.50px;width:42.00px;height:1.00px;background:#3c3c3c;"></div>
<div class="t" style="left:26.16px;top:489.65px;font-size:21.00px;line-height:21.00px;color:#eeeeee;">7</div>
<div style="left:11.00px;top:542.00px;width:42.00px;height:1.00px;background:#3c3c3c;"></div>
<div class="t" style="left:20.32px;top:518.15px;font-size:21.00px;line-height:21.00px;color:#eeeeee;">13</div>
<div style="left:11.00px;top:591.00px;width:42.00px;height:1.00px;background:#3c3c3c;"></div>
<div class="t" style="left:20.32px;top:567.15px;font-size:21.00px;line-height:21.00px;color:#eeeeee;">14</div>
<div style="left:11.00px;top:615.50px;width:42.00px;height:1.00px;background:#3c3c3c;"></div>
<div class="t" style="left:20.32px;top:591.65px;font-size:21.00px;line-height:21.00px;color:#eeeeee;">15</div>
<div style="left:11.00px;top:651.50px;width:42.00px;height:1.00px;background:#3c3c3c;"></div>
<div class="t" style="left:20.32px;top:627.65px;font-size:21.00px;line-height:21.00px;color:#eeeeee;">16</div>
<div style="left:11.00px;top:679.50px;width:42.00px;height:1.00px;background:#3c3c3c;"></div>
<div class="t" style="left:20.32px;top:655.65px;font-size:21.00px;line-height:21.00px;color:#eeeeee;">17</div>
<div style="left:11.00px;top:707.50px;width:42.00px;height:1.00px;background:#3c3c3c;"></div>
<div class="t" style="left:20.32px;top:683.65px;font-size:21.00px;line-height:21.00px;color:#eeeeee;">18</div>
<div style="left:11.00px;top:735.60px;width:42.00px;height:1.00px;background:#3c3c3c;"></div>
<div class="t" style="left:20.32px;top:711.75px;font-size:21.00px;line-height:21.00px;color:#eeeeee;">19</div>
<div style="left:11.00px;top:763.60px;width:42.00px;height:1.00px;background:#3c3c3c;"></div>
<div class="t" style="left:20.32px;top:739.75px;font-size:21.00px;line-height:21.00px;color:#eeeeee;">20</div>
<div style="left:11.00px;top:791.60px;width:42.00px;height:1.00px;background:#3c3c3c;"></div>
<div class="t" style="left:20.32px;top:767.75px;font-size:21.00px;line-height:21.00px;color:#eeeeee;">21</div>
<div style="left:11.00px;top:819.60px;width:42.00px;height:1.00px;background:#3c3c3c;"></div>
<div class="t" style="left:20.32px;top:795.75px;font-size:21.00px;line-height:21.00px;color:#eeeeee;">22</div>
<div style="left:11.00px;top:847.70px;width:42.00px;height:1.00px;background:#3c3c3c;"></div>
<div class="t" style="left:20.32px;top:823.85px;font-size:21.00px;line-height:21.00px;color:#eeeeee;">23</div>
<div style="left:11.00px;top:875.70px;width:42.00px;height:1.00px;background:#3c3c3c;"></div>
<div class="t" style="left:20.32px;top:851.85px;font-size:21.00px;line-height:21.00px;color:#eeeeee;">24</div>
<div style="left:11.00px;top:903.70px;width:42.00px;height:1.00px;background:#3c3c3c;"></div>
<div class="t" style="left:20.32px;top:879.85px;font-size:21.00px;line-height:21.00px;color:#eeeeee;">25</div>
<div style="left:11.00px;top:931.70px;width:42.00px;height:1.00px;background:#3c3c3c;"></div>
<div class="t" style="left:20.32px;top:907.85px;font-size:21.00px;line-height:21.00px;color:#eeeeee;">26</div>
<div style="left:11.00px;top:959.80px;width:42.00px;height:1.00px;background:#3c3c3c;"></div>
<div class="t" style="left:20.32px;top:935.95px;font-size:21.00px;line-height:21.00px;color:#eeeeee;">27</div>
<div style="left:11.00px;top:987.80px;width:42.00px;height:1.00px;background:#3c3c3c;"></div>
<div class="t" style="left:20.32px;top:963.95px;font-size:21.00px;line-height:21.00px;color:#eeeeee;">28</div>
<div style="left:11.00px;top:1015.80px;width:42.00px;height:1.00px;background:#3c3c3c;"></div>
<div class="t" style="left:20.32px;top:991.95px;font-size:21.00px;line-height:21.00px;color:#eeeeee;">29</div>
<div style="left:11.00px;top:1043.80px;width:42.00px;height:1.00px;background:#3c3c3c;"></div>
<div class="t" style="left:20.32px;top:1019.95px;font-size:21.00px;line-height:21.00px;color:#eeeeee;">30</div>
<div style="left:11.00px;top:1071.90px;width:42.00px;height:1.00px;background:#3c3c3c;"></div>
<div class="t" style="left:20.32px;top:1048.05px;font-size:21.00px;line-height:21.00px;color:#eeeeee;">31</div>
<div style="left:11.00px;top:1099.90px;width:42.00px;height:1.00px;background:#3c3c3c;"></div>
<div class="t" style="left:20.32px;top:1076.05px;font-size:21.00px;line-height:21.00px;color:#eeeeee;">32</div>
<div style="left:11.00px;top:1127.90px;width:42.00px;height:1.00px;background:#3c3c3c;"></div>
<div class="t" style="left:20.32px;top:1104.05px;font-size:21.00px;line-height:21.00px;color:#eeeeee;">33</div>
<div style="left:11.00px;top:1156.00px;width:42.00px;height:1.00px;background:#3c3c3c;"></div>
<div class="t" style="left:20.32px;top:1132.15px;font-size:21.00px;line-height:21.00px;color:#eeeeee;">34</div>
<div style="left:11.00px;top:1184.00px;width:42.00px;height:1.00px;background:#3c3c3c;"></div>
<div class="t" style="left:20.32px;top:1160.15px;font-size:21.00px;line-height:21.00px;color:#eeeeee;">35</div>
<div style="left:11.00px;top:1212.00px;width:42.00px;height:1.00px;background:#3c3c3c;"></div>
<div class="t" style="left:20.32px;top:1188.15px;font-size:21.00px;line-height:21.00px;color:#eeeeee;">36</div>
<div style="left:11.00px;top:1247.00px;width:42.00px;height:1.00px;background:#3c3c3c;"></div>
<div class="t" style="left:20.32px;top:1223.15px;font-size:21.00px;line-height:21.00px;color:#eeeeee;">37</div>
<div style="left:11.00px;top:1274.70px;width:42.00px;height:1.00px;background:#3c3c3c;"></div>
<div class="t" style="left:20.32px;top:1250.85px;font-size:21.00px;line-height:21.00px;color:#eeeeee;">38</div>
<div style="left:11.00px;top:1303.10px;width:42.00px;height:1.00px;background:#3c3c3c;"></div>
<div class="t" style="left:20.32px;top:1279.25px;font-size:21.00px;line-height:21.00px;color:#eeeeee;">39</div>
<div style="left:11.00px;top:1345.20px;width:42.00px;height:1.00px;background:#3c3c3c;"></div>
<div class="t" style="left:20.32px;top:1321.35px;font-size:21.00px;line-height:21.00px;color:#eeeeee;">40</div>
<div style="left:11.00px;top:1373.10px;width:42.00px;height:1.00px;background:#3c3c3c;"></div>
<div class="t" style="left:20.32px;top:1349.25px;font-size:21.00px;line-height:21.00px;color:#eeeeee;">41</div>
<div style="left:11.00px;top:1400.90px;width:42.00px;height:1.00px;background:#3c3c3c;"></div>
<div class="t" style="left:20.32px;top:1377.05px;font-size:21.00px;line-height:21.00px;color:#eeeeee;">42</div>
<div style="left:11.00px;top:1428.80px;width:42.00px;height:1.00px;background:#3c3c3c;"></div>
<div class="t" style="left:20.32px;top:1404.95px;font-size:21.00px;line-height:21.00px;color:#eeeeee;">43</div>
<div style="left:11.00px;top:1457.00px;width:42.00px;height:1.00px;background:#3c3c3c;"></div>
<div class="t" style="left:20.32px;top:1433.15px;font-size:21.00px;line-height:21.00px;color:#eeeeee;">44</div>
<div style="left:11.00px;top:1485.00px;width:42.00px;height:1.00px;background:#3c3c3c;"></div>
<div class="t" style="left:20.32px;top:1461.15px;font-size:21.00px;line-height:21.00px;color:#eeeeee;">45</div>
<div style="left:11.00px;top:1527.00px;width:42.00px;height:1.00px;background:#3c3c3c;"></div>
<div class="t" style="left:20.32px;top:1503.15px;font-size:21.00px;line-height:21.00px;color:#eeeeee;">46</div>
<div style="left:11.00px;top:1554.50px;width:42.00px;height:1.00px;background:#3c3c3c;"></div>
<div class="t" style="left:20.32px;top:1530.65px;font-size:21.00px;line-height:21.00px;color:#eeeeee;">47</div>
<div style="left:11.00px;top:1582.50px;width:42.00px;height:1.00px;background:#3c3c3c;"></div>
<div class="t" style="left:20.32px;top:1558.65px;font-size:21.00px;line-height:21.00px;color:#eeeeee;">48</div>
<div style="left:11.00px;top:1611.00px;width:42.00px;height:1.00px;background:#3c3c3c;"></div>
<div class="t" style="left:20.32px;top:1587.15px;font-size:21.00px;line-height:21.00px;color:#eeeeee;">49</div>
<div style="left:11.00px;top:1653.00px;width:42.00px;height:1.00px;background:#3c3c3c;"></div>
<div class="t" style="left:20.32px;top:1629.15px;font-size:21.00px;line-height:21.00px;color:#eeeeee;">50</div>
<div style="left:11.00px;top:304.50px;width:42.00px;height:1.00px;background:#cfcfcf;"></div>
<div style="left:11.00px;top:459.00px;width:42.00px;height:1.00px;background:#3c3c3c;"></div>
<div style="left:11.00px;top:515.50px;width:42.00px;height:1.00px;background:#3c3c3c;"></div>
<div style="left:52.00px;top:304.00px;width:37.00px;height:2.00px;background:#1f7a45;"></div>
<div style="left:52.00px;top:304.00px;width:2.00px;height:51.50px;background:#1f7a45;"></div>
<div style="left:1773.00px;top:305.00px;width:1.00px;height:1365.00px;background:#a6a6a6;"></div>
<div style="left:53.00px;top:513.50px;width:2807.00px;height:1.00px;background:#a6a6a6;"></div>
<div style="left:0;top:0;width:2860px;height:1670px;overflow:hidden">
<div class="t" style="left:95.00px;top:310.69px;font-size:40.60px;line-height:40.60px;color:#262626;font-weight:bold;-webkit-text-stroke:1.06px #262626;letter-spacing:-0.245px;">Startup Costs (CAPEX)</div>
<div class="t" style="left:93.80px;top:359.08px;font-size:35.20px;line-height:35.20px;color:#000;font-weight:bold;-webkit-text-stroke:0.92px #000;letter-spacing:-0.263px;">ABC Company Inc.</div>
<div class="t" style="left:92.60px;top:398.98px;font-size:21.20px;line-height:21.20px;color:#2f7be6;font-weight:bold;-webkit-text-stroke:0.55px #2f7be6;letter-spacing:0.828px;">Go to Table of Contents</div>
<div style="left:92.60px;top:419.80px;width:257.00px;height:1.80px;background:#2f7be6;"></div>
<div class="t" style="left:92.60px;top:462.10px;font-size:22.00px;line-height:22.00px;color:#000;font-weight:bold;-webkit-text-stroke:0.57px #000;letter-spacing:0.482px;">Fiscal Year</div>
<div class="t" style="left:92.60px;top:489.60px;font-size:22.00px;line-height:22.00px;color:#000;font-weight:bold;-webkit-text-stroke:0.57px #000;letter-spacing:0.857px;">Month</div>
<div class="t" style="left:1719.65px;top:461.84px;font-size:21.60px;line-height:21.60px;color:#000;font-weight:bold;-webkit-text-stroke:0.56px #000;">2025</div>
<div class="t" style="left:1696.85px;top:490.34px;font-size:21.60px;line-height:21.60px;color:#000;font-weight:bold;-webkit-text-stroke:0.56px #000;">Dec-25</div>
<div class="t" style="left:1888.65px;top:461.84px;font-size:21.60px;line-height:21.60px;color:#000;font-weight:bold;-webkit-text-stroke:0.56px #000;">2026</div>
<div class="t" style="left:1868.26px;top:490.34px;font-size:21.60px;line-height:21.60px;color:#000;font-weight:bold;-webkit-text-stroke:0.56px #000;">Jan-26</div>
<div class="t" style="left:2057.65px;top:461.84px;font-size:21.60px;line-height:21.60px;color:#000;font-weight:bold;-webkit-text-stroke:0.56px #000;">2026</div>
<div class="t" style="left:2036.08px;top:490.34px;font-size:21.60px;line-height:21.60px;color:#000;font-weight:bold;-webkit-text-stroke:0.56px #000;">Feb-26</div>
<div class="t" style="left:2226.65px;top:461.84px;font-size:21.60px;line-height:21.60px;color:#000;font-weight:bold;-webkit-text-stroke:0.56px #000;">2026</div>
<div class="t" style="left:2205.07px;top:490.34px;font-size:21.60px;line-height:21.60px;color:#000;font-weight:bold;-webkit-text-stroke:0.56px #000;">Mar-26</div>
<div class="t" style="left:2395.65px;top:461.84px;font-size:21.60px;line-height:21.60px;color:#000;font-weight:bold;-webkit-text-stroke:0.56px #000;">2026</div>
<div class="t" style="left:2375.28px;top:490.34px;font-size:21.60px;line-height:21.60px;color:#000;font-weight:bold;-webkit-text-stroke:0.56px #000;">Apr-26</div>
<div class="t" style="left:2564.65px;top:461.84px;font-size:21.60px;line-height:21.60px;color:#000;font-weight:bold;-webkit-text-stroke:0.56px #000;">2026</div>
<div class="t" style="left:2539.46px;top:490.34px;font-size:21.60px;line-height:21.60px;color:#000;font-weight:bold;-webkit-text-stroke:0.56px #000;">May-26</div>
<div class="t" style="left:2733.65px;top:461.84px;font-size:21.60px;line-height:21.60px;color:#000;font-weight:bold;-webkit-text-stroke:0.56px #000;">2026</div>
<div class="t" style="left:2712.08px;top:490.34px;font-size:21.60px;line-height:21.60px;color:#000;font-weight:bold;-webkit-text-stroke:0.56px #000;">Jun-26</div>
<div class="t" style="left:2902.65px;top:461.84px;font-size:21.60px;line-height:21.60px;color:#000;font-weight:bold;-webkit-text-stroke:0.56px #000;">2026</div>
<div class="t" style="left:2888.27px;top:490.34px;font-size:21.60px;line-height:21.60px;color:#000;font-weight:bold;-webkit-text-stroke:0.56px #000;">Jul-26</div>
<div class="t" style="left:95.60px;top:547.09px;font-size:40.60px;line-height:40.60px;color:#262626;font-weight:bold;-webkit-text-stroke:1.06px #262626;letter-spacing:-0.069px;">Startup Costs, $</div>
<div class="t" style="left:95.60px;top:1304.49px;font-size:40.60px;line-height:40.60px;color:#262626;font-weight:bold;-webkit-text-stroke:1.06px #262626;letter-spacing:0.124px;">Startup Costs Depreciation, $</div>
<div style="left:137.00px;top:617.00px;width:1636.00px;height:33.00px;background:#6b73e6;"></div>
<div style="left:945.90px;top:616.00px;width:2.40px;height:36.00px;background:#ffffff;"></div>
<div style="left:1151.90px;top:616.00px;width:2.40px;height:36.00px;background:#ffffff;"></div>
<div style="left:1357.90px;top:616.00px;width:2.40px;height:36.00px;background:#ffffff;"></div>
<div style="left:1564.90px;top:616.00px;width:2.40px;height:36.00px;background:#ffffff;"></div>
<div class="t" style="left:483.00px;top:623.34px;font-size:21.60px;line-height:21.60px;color:#fff;font-weight:bold;-webkit-text-stroke:0.56px #fff;letter-spacing:0.862px;">Categories</div>
<div class="t" style="left:984.30px;top:623.34px;font-size:21.60px;line-height:21.60px;color:#fff;font-weight:bold;-webkit-text-stroke:0.56px #fff;letter-spacing:0.578px;">Launch date</div>
<div class="t" style="left:1209.30px;top:623.34px;font-size:21.60px;line-height:21.60px;color:#fff;font-weight:bold;-webkit-text-stroke:0.56px #fff;letter-spacing:0.612px;">End date</div>
<div class="t" style="left:1398.60px;top:623.34px;font-size:21.60px;line-height:21.60px;color:#fff;font-weight:bold;-webkit-text-stroke:0.56px #fff;letter-spacing:0.699px;">Spending, $</div>
<div class="t" style="left:1598.00px;top:623.34px;font-size:21.60px;line-height:21.60px;color:#fff;font-weight:bold;-webkit-text-stroke:0.56px #fff;letter-spacing:0.744px;">Amortizable?</div>
<div style="left:137.00px;top:653.30px;width:1636.00px;height:26.70px;background:#fff06a;"></div>
<div style="left:945.90px;top:652.00px;width:2.40px;height:28.00px;background:#ffffff;"></div>
<div style="left:1151.90px;top:652.00px;width:2.40px;height:28.00px;background:#ffffff;"></div>
<div style="left:1357.90px;top:652.00px;width:2.40px;height:28.00px;background:#ffffff;"></div>
<div style="left:1564.90px;top:652.00px;width:2.40px;height:28.00px;background:#ffffff;"></div>
<div class="t" style="left:141.70px;top:655.70px;font-size:22.00px;line-height:22.00px;color:#1a1a1a;letter-spacing:-0.299px;">Land Acquisition</div>
<div class="t" style="left:1016.36px;top:655.70px;font-size:22.00px;line-height:22.00px;color:#1a1a1a;">Jan-26</div>
<div class="t" style="left:1221.16px;top:655.70px;font-size:22.00px;line-height:22.00px;color:#1a1a1a;">Mar-26</div>
<div class="t" style="left:1456.43px;top:655.70px;font-size:22.00px;line-height:22.00px;color:#1a1a1a;">5,000,000</div>
<div class="t" style="left:1652.05px;top:655.70px;font-size:22.00px;line-height:22.00px;color:#1a1a1a;">Yes</div>
<div class="t" style="left:1832.43px;top:655.70px;font-size:22.00px;line-height:22.00px;color:#1a1a1a;">1,666,667</div>
<div class="t" style="left:2001.43px;top:655.70px;font-size:22.00px;line-height:22.00px;color:#1a1a1a;">1,666,667</div>
<div class="t" style="left:2170.43px;top:655.70px;font-size:22.00px;line-height:22.00px;color:#1a1a1a;">1,666,667</div>
<div class="t" style="left:2406.70px;top:655.70px;font-size:22.00px;line-height:22.00px;color:#1a1a1a;">-</div>
<div class="t" style="left:2575.70px;top:655.70px;font-size:22.00px;line-height:22.00px;color:#1a1a1a;">-</div>
<div class="t" style="left:2744.70px;top:655.70px;font-size:22.00px;line-height:22.00px;color:#1a1a1a;">-</div>
<div class="t" style="left:2913.70px;top:655.70px;font-size:22.00px;line-height:22.00px;color:#1a1a1a;">-</div>
<div style="left:137.00px;top:681.30px;width:1636.00px;height:26.70px;background:#fff06a;"></div>
<div style="left:945.90px;top:680.00px;width:2.40px;height:28.00px;background:#ffffff;"></div>
<div style="left:1151.90px;top:680.00px;width:2.40px;height:28.00px;background:#ffffff;"></div>
<div style="left:1357.90px;top:680.00px;width:2.40px;height:28.00px;background:#ffffff;"></div>
<div style="left:1564.90px;top:680.00px;width:2.40px;height:28.00px;background:#ffffff;"></div>
<div class="t" style="left:141.70px;top:683.70px;font-size:22.00px;line-height:22.00px;color:#1a1a1a;letter-spacing:-0.302px;">Plant Engineering Design</div>
<div class="t" style="left:1015.15px;top:683.70px;font-size:22.00px;line-height:22.00px;color:#1a1a1a;">Feb-26</div>
<div class="t" style="left:1222.36px;top:683.70px;font-size:22.00px;line-height:22.00px;color:#1a1a1a;">Jun-26</div>
<div class="t" style="left:1456.43px;top:683.70px;font-size:22.00px;line-height:22.00px;color:#1a1a1a;">2,500,000</div>
<div class="t" style="left:1652.05px;top:683.70px;font-size:22.00px;line-height:22.00px;color:#1a1a1a;">Yes</div>
<div class="t" style="left:1899.70px;top:683.70px;font-size:22.00px;line-height:22.00px;color:#1a1a1a;">-</div>
<div class="t" style="left:2019.77px;top:683.70px;font-size:22.00px;line-height:22.00px;color:#1a1a1a;">500,000</div>
<div class="t" style="left:2188.77px;top:683.70px;font-size:22.00px;line-height:22.00px;color:#1a1a1a;">500,000</div>
<div class="t" style="left:2357.77px;top:683.70px;font-size:22.00px;line-height:22.00px;color:#1a1a1a;">500,000</div>
<div class="t" style="left:2526.77px;top:683.70px;font-size:22.00px;line-height:22.00px;color:#1a1a1a;">500,000</div>
<div class="t" style="left:2695.77px;top:683.70px;font-size:22.00px;line-height:22.00px;color:#1a1a1a;">500,000</div>
<div class="t" style="left:2913.70px;top:683.70px;font-size:22.00px;line-height:22.00px;color:#1a1a1a;">-</div>
<div style="left:137.00px;top:709.30px;width:1636.00px;height:26.80px;background:#fff06a;"></div>
<div style="left:945.90px;top:708.00px;width:2.40px;height:28.10px;background:#ffffff;"></div>
<div style="left:1151.90px;top:708.00px;width:2.40px;height:28.10px;background:#ffffff;"></div>
<div style="left:1357.90px;top:708.00px;width:2.40px;height:28.10px;background:#ffffff;"></div>
<div style="left:1564.90px;top:708.00px;width:2.40px;height:28.10px;background:#ffffff;"></div>
<div class="t" style="left:141.70px;top:711.80px;font-size:22.00px;line-height:22.00px;color:#1a1a1a;letter-spacing:-0.275px;">Construction &amp; Installation</div>
<div class="t" style="left:1016.98px;top:711.80px;font-size:22.00px;line-height:22.00px;color:#1a1a1a;">Apr-26</div>
<div class="t" style="left:1220.54px;top:711.80px;font-size:22.00px;line-height:22.00px;color:#1a1a1a;">Dec-26</div>
<div class="t" style="left:1444.19px;top:711.80px;font-size:22.00px;line-height:22.00px;color:#1a1a1a;">30,000,000</div>
<div class="t" style="left:1652.05px;top:711.80px;font-size:22.00px;line-height:22.00px;color:#1a1a1a;">Yes</div>
<div class="t" style="left:1899.70px;top:711.80px;font-size:22.00px;line-height:22.00px;color:#1a1a1a;">-</div>
<div class="t" style="left:2068.70px;top:711.80px;font-size:22.00px;line-height:22.00px;color:#1a1a1a;">-</div>
<div class="t" style="left:2237.70px;top:711.80px;font-size:22.00px;line-height:22.00px;color:#1a1a1a;">-</div>
<div class="t" style="left:2339.43px;top:711.80px;font-size:22.00px;line-height:22.00px;color:#1a1a1a;">3,333,333</div>
<div class="t" style="left:2508.43px;top:711.80px;font-size:22.00px;line-height:22.00px;color:#1a1a1a;">3,333,333</div>
<div class="t" style="left:2677.43px;top:711.80px;font-size:22.00px;line-height:22.00px;color:#1a1a1a;">3,333,333</div>
<div class="t" style="left:2846.43px;top:711.80px;font-size:22.00px;line-height:22.00px;color:#1a1a1a;">3,333,333</div>
<div style="left:137.00px;top:737.40px;width:1636.00px;height:26.70px;background:#fff06a;"></div>
<div style="left:945.90px;top:736.10px;width:2.40px;height:28.00px;background:#ffffff;"></div>
<div style="left:1151.90px;top:736.10px;width:2.40px;height:28.00px;background:#ffffff;"></div>
<div style="left:1357.90px;top:736.10px;width:2.40px;height:28.00px;background:#ffffff;"></div>
<div style="left:1564.90px;top:736.10px;width:2.40px;height:28.00px;background:#ffffff;"></div>
<div class="t" style="left:141.70px;top:739.80px;font-size:22.00px;line-height:22.00px;color:#1a1a1a;letter-spacing:-0.323px;">Biomass Handling Equipment</div>
<div class="t" style="left:1020.04px;top:739.80px;font-size:22.00px;line-height:22.00px;color:#1a1a1a;">Jul-26</div>
<div class="t" style="left:1220.54px;top:739.80px;font-size:22.00px;line-height:22.00px;color:#1a1a1a;">Nov-26</div>
<div class="t" style="left:1456.43px;top:739.80px;font-size:22.00px;line-height:22.00px;color:#1a1a1a;">4,000,000</div>
<div class="t" style="left:1652.05px;top:739.80px;font-size:22.00px;line-height:22.00px;color:#1a1a1a;">Yes</div>
<div class="t" style="left:1899.70px;top:739.80px;font-size:22.00px;line-height:22.00px;color:#1a1a1a;">-</div>
<div class="t" style="left:2068.70px;top:739.80px;font-size:22.00px;line-height:22.00px;color:#1a1a1a;">-</div>
<div class="t" style="left:2237.70px;top:739.80px;font-size:22.00px;line-height:22.00px;color:#1a1a1a;">-</div>
<div class="t" style="left:2406.70px;top:739.80px;font-size:22.00px;line-height:22.00px;color:#1a1a1a;">-</div>
<div class="t" style="left:2575.70px;top:739.80px;font-size:22.00px;line-height:22.00px;color:#1a1a1a;">-</div>
<div class="t" style="left:2744.70px;top:739.80px;font-size:22.00px;line-height:22.00px;color:#1a1a1a;">-</div>
<div class="t" style="left:2864.77px;top:739.80px;font-size:22.00px;line-height:22.00px;color:#1a1a1a;">800,000</div>
<div style="left:137.00px;top:765.40px;width:1636.00px;height:26.70px;background:#fff06a;"></div>
<div style="left:945.90px;top:764.10px;width:2.40px;height:28.00px;background:#ffffff;"></div>
<div style="left:1151.90px;top:764.10px;width:2.40px;height:28.00px;background:#ffffff;"></div>
<div style="left:1357.90px;top:764.10px;width:2.40px;height:28.00px;background:#ffffff;"></div>
<div style="left:1564.90px;top:764.10px;width:2.40px;height:28.00px;background:#ffffff;"></div>
<div class="t" style="left:141.70px;top:767.80px;font-size:22.00px;line-height:22.00px;color:#1a1a1a;letter-spacing:-0.305px;">Turbine Generator Set</div>
<div class="t" style="left:1014.53px;top:767.80px;font-size:22.00px;line-height:22.00px;color:#1a1a1a;">Aug-26</div>
<div class="t" style="left:1220.54px;top:767.80px;font-size:22.00px;line-height:22.00px;color:#1a1a1a;">Dec-26</div>
<div class="t" style="left:1456.43px;top:767.80px;font-size:22.00px;line-height:22.00px;color:#1a1a1a;">8,000,000</div>
<div class="t" style="left:1652.05px;top:767.80px;font-size:22.00px;line-height:22.00px;color:#1a1a1a;">Yes</div>
<div class="t" style="left:1899.70px;top:767.80px;font-size:22.00px;line-height:22.00px;color:#1a1a1a;">-</div>
<div class="t" style="left:2068.70px;top:767.80px;font-size:22.00px;line-height:22.00px;color:#1a1a1a;">-</div>
<div class="t" style="left:2237.70px;top:767.80px;font-size:22.00px;line-height:22.00px;color:#1a1a1a;">-</div>
<div class="t" style="left:2406.70px;top:767.80px;font-size:22.00px;line-height:22.00px;color:#1a1a1a;">-</div>
<div class="t" style="left:2575.70px;top:767.80px;font-size:22.00px;line-height:22.00px;color:#1a1a1a;">-</div>
<div class="t" style="left:2744.70px;top:767.80px;font-size:22.00px;line-height:22.00px;color:#1a1a1a;">-</div>
<div class="t" style="left:2913.70px;top:767.80px;font-size:22.00px;line-height:22.00px;color:#1a1a1a;">-</div>
<div style="left:137.00px;top:793.40px;width:1636.00px;height:26.70px;background:#fff06a;"></div>
<div style="left:945.90px;top:792.10px;width:2.40px;height:28.00px;background:#ffffff;"></div>
<div style="left:1151.90px;top:792.10px;width:2.40px;height:28.00px;background:#ffffff;"></div>
<div style="left:1357.90px;top:792.10px;width:2.40px;height:28.00px;background:#ffffff;"></div>
<div style="left:1564.90px;top:792.10px;width:2.40px;height:28.00px;background:#ffffff;"></div>
<div class="t" style="left:141.70px;top:795.80px;font-size:22.00px;line-height:22.00px;color:#1a1a1a;letter-spacing:-0.317px;">Boiler System</div>
<div class="t" style="left:1020.04px;top:795.80px;font-size:22.00px;line-height:22.00px;color:#1a1a1a;">Jul-26</div>
<div class="t" style="left:1220.54px;top:795.80px;font-size:22.00px;line-height:22.00px;color:#1a1a1a;">Nov-26</div>
<div class="t" style="left:1456.43px;top:795.80px;font-size:22.00px;line-height:22.00px;color:#1a1a1a;">7,000,000</div>
<div class="t" style="left:1652.05px;top:795.80px;font-size:22.00px;line-height:22.00px;color:#1a1a1a;">Yes</div>
<div class="t" style="left:1899.70px;top:795.80px;font-size:22.00px;line-height:22.00px;color:#1a1a1a;">-</div>
<div class="t" style="left:2068.70px;top:795.80px;font-size:22.00px;line-height:22.00px;color:#1a1a1a;">-</div>
<div class="t" style="left:2237.70px;top:795.80px;font-size:22.00px;line-height:22.00px;color:#1a1a1a;">-</div>
<div class="t" style="left:2406.70px;top:795.80px;font-size:22.00px;line-height:22.00px;color:#1a1a1a;">-</div>
<div class="t" style="left:2575.70px;top:795.80px;font-size:22.00px;line-height:22.00px;color:#1a1a1a;">-</div>
<div class="t" style="left:2744.70px;top:795.80px;font-size:22.00px;line-height:22.00px;color:#1a1a1a;">-</div>
<div class="t" style="left:2846.43px;top:795.80px;font-size:22.00px;line-height:22.00px;color:#1a1a1a;">1,400,000</div>
<div style="left:137.00px;top:821.40px;width:1636.00px;height:26.80px;background:#fff06a;"></div>
<div style="left:945.90px;top:820.10px;width:2.40px;height:28.10px;background:#ffffff;"></div>
<div style="left:1151.90px;top:820.10px;width:2.40px;height:28.10px;background:#ffffff;"></div>
<div style="left:1357.90px;top:820.10px;width:2.40px;height:28.10px;background:#ffffff;"></div>
<div style="left:1564.90px;top:820.10px;width:2.40px;height:28.10px;background:#ffffff;"></div>
<div class="t" style="left:141.70px;top:823.90px;font-size:22.00px;line-height:22.00px;color:#1a1a1a;letter-spacing:-0.313px;">Emissions Control System</div>
<div class="t" style="left:1014.53px;top:823.90px;font-size:22.00px;line-height:22.00px;color:#1a1a1a;">Sep-26</div>
<div class="t" style="left:1220.54px;top:823.90px;font-size:22.00px;line-height:22.00px;color:#1a1a1a;">Dec-26</div>
<div class="t" style="left:1456.43px;top:823.90px;font-size:22.00px;line-height:22.00px;color:#1a1a1a;">3,500,000</div>
<div class="t" style="left:1652.05px;top:823.90px;font-size:22.00px;line-height:22.00px;color:#1a1a1a;">Yes</div>
<div class="t" style="left:1899.70px;top:823.90px;font-size:22.00px;line-height:22.00px;color:#1a1a1a;">-</div>
<div class="t" style="left:2068.70px;top:823.90px;font-size:22.00px;line-height:22.00px;color:#1a1a1a;">-</div>
<div class="t" style="left:2237.70px;top:823.90px;font-size:22.00px;line-height:22.00px;color:#1a1a1a;">-</div>
<div class="t" style="left:2406.70px;top:823.90px;font-size:22.00px;line-height:22.00px;color:#1a1a1a;">-</div>
<div class="t" style="left:2575.70px;top:823.90px;font-size:22.00px;line-height:22.00px;color:#1a1a1a;">-</div>
<div class="t" style="left:2744.70px;top:823.90px;font-size:22.00px;line-height:22.00px;color:#1a1a1a;">-</div>
<div class="t" style="left:2913.70px;top:823.90px;font-size:22.00px;line-height:22.00px;color:#1a1a1a;">-</div>
<div style="left:137.00px;top:849.50px;width:1636.00px;height:26.70px;background:#fff06a;"></div>
<div style="left:945.90px;top:848.20px;width:2.40px;height:28.00px;background:#ffffff;"></div>
<div style="left:1151.90px;top:848.20px;width:2.40px;height:28.00px;background:#ffffff;"></div>
<div style="left:1357.90px;top:848.20px;width:2.40px;height:28.00px;background:#ffffff;"></div>
<div style="left:1564.90px;top:848.20px;width:2.40px;height:28.00px;background:#ffffff;"></div>
<div class="t" style="left:141.70px;top:851.90px;font-size:22.00px;line-height:22.00px;color:#1a1a1a;letter-spacing:-0.278px;">Grid Interconnection Infra</div>
<div class="t" style="left:1016.99px;top:851.90px;font-size:22.00px;line-height:22.00px;color:#1a1a1a;">Oct-26</div>
<div class="t" style="left:1220.54px;top:851.90px;font-size:22.00px;line-height:22.00px;color:#1a1a1a;">Dec-26</div>
<div class="t" style="left:1456.43px;top:851.90px;font-size:22.00px;line-height:22.00px;color:#1a1a1a;">1,500,000</div>
<div class="t" style="left:1652.05px;top:851.90px;font-size:22.00px;line-height:22.00px;color:#1a1a1a;">Yes</div>
<div class="t" style="left:1899.70px;top:851.90px;font-size:22.00px;line-height:22.00px;color:#1a1a1a;">-</div>
<div class="t" style="left:2068.70px;top:851.90px;font-size:22.00px;line-height:22.00px;color:#1a1a1a;">-</div>
<div class="t" style="left:2237.70px;top:851.90px;font-size:22.00px;line-height:22.00px;color:#1a1a1a;">-</div>
<div class="t" style="left:2406.70px;top:851.90px;font-size:22.00px;line-height:22.00px;color:#1a1a1a;">-</div>
<div class="t" style="left:2575.70px;top:851.90px;font-size:22.00px;line-height:22.00px;color:#1a1a1a;">-</div>
<div class="t" style="left:2744.70px;top:851.90px;font-size:22.00px;line-height:22.00px;color:#1a1a1a;">-</div>
<div class="t" style="left:2913.70px;top:851.90px;font-size:22.00px;line-height:22.00px;color:#1a1a1a;">-</div>
<div style="left:137.00px;top:877.50px;width:1636.00px;height:26.70px;background:#fff06a;"></div>
<div style="left:945.90px;top:876.20px;width:2.40px;height:28.00px;background:#ffffff;"></div>
<div style="left:1151.90px;top:876.20px;width:2.40px;height:28.00px;background:#ffffff;"></div>
<div style="left:1357.90px;top:876.20px;width:2.40px;height:28.00px;background:#ffffff;"></div>
<div style="left:1564.90px;top:876.20px;width:2.40px;height:28.00px;background:#ffffff;"></div>
<div class="t" style="left:141.70px;top:879.90px;font-size:22.00px;line-height:22.00px;color:#1a1a1a;letter-spacing:-0.275px;">Initial Feedstock Inventory</div>
<div class="t" style="left:1014.54px;top:879.90px;font-size:22.00px;line-height:22.00px;color:#1a1a1a;">Nov-26</div>
<div class="t" style="left:1220.54px;top:879.90px;font-size:22.00px;line-height:22.00px;color:#1a1a1a;">Dec-26</div>
<div class="t" style="left:1456.43px;top:879.90px;font-size:22.00px;line-height:22.00px;color:#1a1a1a;">1,000,000</div>
<div class="t" style="left:1652.05px;top:879.90px;font-size:22.00px;line-height:22.00px;color:#1a1a1a;">Yes</div>
<div class="t" style="left:1899.70px;top:879.90px;font-size:22.00px;line-height:22.00px;color:#1a1a1a;">-</div>
<div class="t" style="left:2068.70px;top:879.90px;font-size:22.00px;line-height:22.00px;color:#1a1a1a;">-</div>
<div class="t" style="left:2237.70px;top:879.90px;font-size:22.00px;line-height:22.00px;color:#1a1a1a;">-</div>
<div class="t" style="left:2406.70px;top:879.90px;font-size:22.00px;line-height:22.00px;color:#1a1a1a;">-</div>
<div class="t" style="left:2575.70px;top:879.90px;font-size:22.00px;line-height:22.00px;color:#1a1a1a;">-</div>
<div class="t" style="left:2744.70px;top:879.90px;font-size:22.00px;line-height:22.00px;color:#1a1a1a;">-</div>
<div class="t" style="left:2913.70px;top:879.90px;font-size:22.00px;line-height:22.00px;color:#1a1a1a;">-</div>
<div style="left:137.00px;top:905.50px;width:1636.00px;height:26.70px;background:#fff06a;"></div>
<div style="left:945.90px;top:904.20px;width:2.40px;height:28.00px;background:#ffffff;"></div>
<div style="left:1151.90px;top:904.20px;width:2.40px;height:28.00px;background:#ffffff;"></div>
<div style="left:1357.90px;top:904.20px;width:2.40px;height:28.00px;background:#ffffff;"></div>
<div style="left:1564.90px;top:904.20px;width:2.40px;height:28.00px;background:#ffffff;"></div>
<div class="t" style="left:141.70px;top:907.90px;font-size:22.00px;line-height:22.00px;color:#1a1a1a;letter-spacing:-0.272px;">Administrative Building Fit-out</div>
<div class="t" style="left:1016.36px;top:907.90px;font-size:22.00px;line-height:22.00px;color:#1a1a1a;">Jun-26</div>
<div class="t" style="left:1220.53px;top:907.90px;font-size:22.00px;line-height:22.00px;color:#1a1a1a;">Aug-26</div>
<div class="t" style="left:1474.77px;top:907.90px;font-size:22.00px;line-height:22.00px;color:#1a1a1a;">750,000</div>
<div class="t" style="left:1652.05px;top:907.90px;font-size:22.00px;line-height:22.00px;color:#1a1a1a;">Yes</div>
<div class="t" style="left:1899.70px;top:907.90px;font-size:22.00px;line-height:22.00px;color:#1a1a1a;">-</div>
<div class="t" style="left:2068.70px;top:907.90px;font-size:22.00px;line-height:22.00px;color:#1a1a1a;">-</div>
<div class="t" style="left:2237.70px;top:907.90px;font-size:22.00px;line-height:22.00px;color:#1a1a1a;">-</div>
<div class="t" style="left:2406.70px;top:907.90px;font-size:22.00px;line-height:22.00px;color:#1a1a1a;">-</div>
<div class="t" style="left:2575.70px;top:907.90px;font-size:22.00px;line-height:22.00px;color:#1a1a1a;">-</div>
<div class="t" style="left:2695.77px;top:907.90px;font-size:22.00px;line-height:22.00px;color:#1a1a1a;">250,000</div>
<div class="t" style="left:2864.77px;top:907.90px;font-size:22.00px;line-height:22.00px;color:#1a1a1a;">250,000</div>
<div style="left:137.00px;top:933.50px;width:1636.00px;height:26.80px;background:#fff06a;"></div>
<div style="left:945.90px;top:932.20px;width:2.40px;height:28.10px;background:#ffffff;"></div>
<div style="left:1151.90px;top:932.20px;width:2.40px;height:28.10px;background:#ffffff;"></div>
<div style="left:1357.90px;top:932.20px;width:2.40px;height:28.10px;background:#ffffff;"></div>
<div style="left:1564.90px;top:932.20px;width:2.40px;height:28.10px;background:#ffffff;"></div>
<div class="t" style="left:142.20px;top:936.00px;font-size:22.00px;line-height:22.00px;color:#1a1a1a;">-</div>
<div class="t" style="left:1652.05px;top:936.00px;font-size:22.00px;line-height:22.00px;color:#1a1a1a;">Yes</div>
<div class="t" style="left:1899.70px;top:936.00px;font-size:22.00px;line-height:22.00px;color:#1a1a1a;">-</div>
<div class="t" style="left:2068.70px;top:936.00px;font-size:22.00px;line-height:22.00px;color:#1a1a1a;">-</div>
<div class="t" style="left:2237.70px;top:936.00px;font-size:22.00px;line-height:22.00px;color:#1a1a1a;">-</div>
<div class="t" style="left:2406.70px;top:936.00px;font-size:22.00px;line-height:22.00px;color:#1a1a1a;">-</div>
<div class="t" style="left:2575.70px;top:936.00px;font-size:22.00px;line-height:22.00px;color:#1a1a1a;">-</div>
<div class="t" style="left:2744.70px;top:936.00px;font-size:22.00px;line-height:22.00px;color:#1a1a1a;">-</div>
<div class="t" style="left:2913.70px;top:936.00px;font-size:22.00px;line-height:22.00px;color:#1a1a1a;">-</div>
<div style="left:137.00px;top:961.60px;width:1636.00px;height:26.70px;background:#fff06a;"></div>
<div style="left:945.90px;top:960.30px;width:2.40px;height:28.00px;background:#ffffff;"></div>
<div style="left:1151.90px;top:960.30px;width:2.40px;height:28.00px;background:#ffffff;"></div>
<div style="left:1357.90px;top:960.30px;width:2.40px;height:28.00px;background:#ffffff;"></div>
<div style="left:1564.90px;top:960.30px;width:2.40px;height:28.00px;background:#ffffff;"></div>
<div class="t" style="left:142.20px;top:964.00px;font-size:22.00px;line-height:22.00px;color:#1a1a1a;">-</div>
<div class="t" style="left:1652.05px;top:964.00px;font-size:22.00px;line-height:22.00px;color:#1a1a1a;">Yes</div>
<div class="t" style="left:1899.70px;top:964.00px;font-size:22.00px;line-height:22.00px;color:#1a1a1a;">-</div>
<div class="t" style="left:2068.70px;top:964.00px;font-size:22.00px;line-height:22.00px;color:#1a1a1a;">-</div>
<div class="t" style="left:2237.70px;top:964.00px;font-size:22.00px;line-height:22.00px;color:#1a1a1a;">-</div>
<div class="t" style="left:2406.70px;top:964.00px;font-size:22.00px;line-height:22.00px;color:#1a1a1a;">-</div>
<div class="t" style="left:2575.70px;top:964.00px;font-size:22.00px;line-height:22.00px;color:#1a1a1a;">-</div>
<div class="t" style="left:2744.70px;top:964.00px;font-size:22.00px;line-height:22.00px;color:#1a1a1a;">-</div>
<div class="t" style="left:2913.70px;top:964.00px;font-size:22.00px;line-height:22.00px;color:#1a1a1a;">-</div>
<div style="left:137.00px;top:989.60px;width:1636.00px;height:26.70px;background:#fff06a;"></div>
<div style="left:945.90px;top:988.30px;width:2.40px;height:28.00px;background:#ffffff;"></div>
<div style="left:1151.90px;top:988.30px;width:2.40px;height:28.00px;background:#ffffff;"></div>
<div style="left:1357.90px;top:988.30px;width:2.40px;height:28.00px;background:#ffffff;"></div>
<div style="left:1564.90px;top:988.30px;width:2.40px;height:28.00px;background:#ffffff;"></div>
<div class="t" style="left:142.20px;top:992.00px;font-size:22.00px;line-height:22.00px;color:#1a1a1a;">-</div>
<div class="t" style="left:1652.05px;top:992.00px;font-size:22.00px;line-height:22.00px;color:#1a1a1a;">Yes</div>
<div class="t" style="left:1899.70px;top:992.00px;font-size:22.00px;line-height:22.00px;color:#1a1a1a;">-</div>
<div class="t" style="left:2068.70px;top:992.00px;font-size:22.00px;line-height:22.00px;color:#1a1a1a;">-</div>
<div class="t" style="left:2237.70px;top:992.00px;font-size:22.00px;line-height:22.00px;color:#1a1a1a;">-</div>
<div class="t" style="left:2406.70px;top:992.00px;font-size:22.00px;line-height:22.00px;color:#1a1a1a;">-</div>
<div class="t" style="left:2575.70px;top:992.00px;font-size:22.00px;line-height:22.00px;color:#1a1a1a;">-</div>
<div class="t" style="left:2744.70px;top:992.00px;font-size:22.00px;line-height:22.00px;color:#1a1a1a;">-</div>
<div class="t" style="left:2913.70px;top:992.00px;font-size:22.00px;line-height:22.00px;color:#1a1a1a;">-</div>
<div style="left:137.00px;top:1017.60px;width:1636.00px;height:26.70px;background:#fff06a;"></div>
<div style="left:945.90px;top:1016.30px;width:2.40px;height:28.00px;background:#ffffff;"></div>
<div style="left:1151.90px;top:1016.30px;width:2.40px;height:28.00px;background:#ffffff;"></div>
<div style="left:1357.90px;top:1016.30px;width:2.40px;height:28.00px;background:#ffffff;"></div>
<div style="left:1564.90px;top:1016.30px;width:2.40px;height:28.00px;background:#ffffff;"></div>
<div class="t" style="left:142.20px;top:1020.00px;font-size:22.00px;line-height:22.00px;color:#1a1a1a;">-</div>
<div class="t" style="left:1652.05px;top:1020.00px;font-size:22.00px;line-height:22.00px;color:#1a1a1a;">Yes</div>
<div class="t" style="left:1899.70px;top:1020.00px;font-size:22.00px;line-height:22.00px;color:#1a1a1a;">-</div>
<div class="t" style="left:2068.70px;top:1020.00px;font-size:22.00px;line-height:22.00px;color:#1a1a1a;">-</div>
<div class="t" style="left:2237.70px;top:1020.00px;font-size:22.00px;line-height:22.00px;color:#1a1a1a;">-</div>
<div class="t" style="left:2406.70px;top:1020.00px;font-size:22.00px;line-height:22.00px;color:#1a1a1a;">-</div>
<div class="t" style="left:2575.70px;top:1020.00px;font-size:22.00px;line-height:22.00px;color:#1a1a1a;">-</div>
<div class="t" style="left:2744.70px;top:1020.00px;font-size:22.00px;line-height:22.00px;color:#1a1a1a;">-</div>
<div class="t" style="left:2913.70px;top:1020.00px;font-size:22.00px;line-height:22.00px;color:#1a1a1a;">-</div>
<div style="left:137.00px;top:1045.60px;width:1636.00px;height:26.80px;background:#fff06a;"></div>
<div style="left:945.90px;top:1044.30px;width:2.40px;height:28.10px;background:#ffffff;"></div>
<div style="left:1151.90px;top:1044.30px;width:2.40px;height:28.10px;background:#ffffff;"></div>
<div style="left:1357.90px;top:1044.30px;width:2.40px;height:28.10px;background:#ffffff;"></div>
<div style="left:1564.90px;top:1044.30px;width:2.40px;height:28.10px;background:#ffffff;"></div>
<div class="t" style="left:142.20px;top:1048.10px;font-size:22.00px;line-height:22.00px;color:#1a1a1a;">-</div>
<div class="t" style="left:1652.05px;top:1048.10px;font-size:22.00px;line-height:22.00px;color:#1a1a1a;">Yes</div>
<div class="t" style="left:1899.70px;top:1048.10px;font-size:22.00px;line-height:22.00px;color:#1a1a1a;">-</div>
<div class="t" style="left:2068.70px;top:1048.10px;font-size:22.00px;line-height:22.00px;color:#1a1a1a;">-</div>
<div class="t" style="left:2237.70px;top:1048.10px;font-size:22.00px;line-height:22.00px;color:#1a1a1a;">-</div>
<div class="t" style="left:2406.70px;top:1048.10px;font-size:22.00px;line-height:22.00px;color:#1a1a1a;">-</div>
<div class="t" style="left:2575.70px;top:1048.10px;font-size:22.00px;line-height:22.00px;color:#1a1a1a;">-</div>
<div class="t" style="left:2744.70px;top:1048.10px;font-size:22.00px;line-height:22.00px;color:#1a1a1a;">-</div>
<div class="t" style="left:2913.70px;top:1048.10px;font-size:22.00px;line-height:22.00px;color:#1a1a1a;">-</div>
<div style="left:137.00px;top:1073.70px;width:1636.00px;height:26.70px;background:#fff06a;"></div>
<div style="left:945.90px;top:1072.40px;width:2.40px;height:28.00px;background:#ffffff;"></div>
<div style="left:1151.90px;top:1072.40px;width:2.40px;height:28.00px;background:#ffffff;"></div>
<div style="left:1357.90px;top:1072.40px;width:2.40px;height:28.00px;background:#ffffff;"></div>
<div style="left:1564.90px;top:1072.40px;width:2.40px;height:28.00px;background:#ffffff;"></div>
<div class="t" style="left:142.20px;top:1076.10px;font-size:22.00px;line-height:22.00px;color:#1a1a1a;">-</div>
<div class="t" style="left:1652.05px;top:1076.10px;font-size:22.00px;line-height:22.00px;color:#1a1a1a;">Yes</div>
<div class="t" style="left:1899.70px;top:1076.10px;font-size:22.00px;line-height:22.00px;color:#1a1a1a;">-</div>
<div class="t" style="left:2068.70px;top:1076.10px;font-size:22.00px;line-height:22.00px;color:#1a1a1a;">-</div>
<div class="t" style="left:2237.70px;top:1076.10px;font-size:22.00px;line-height:22.00px;color:#1a1a1a;">-</div>
<div class="t" style="left:2406.70px;top:1076.10px;font-size:22.00px;line-height:22.00px;color:#1a1a1a;">-</div>
<div class="t" style="left:2575.70px;top:1076.10px;font-size:22.00px;line-height:22.00px;color:#1a1a1a;">-</div>
<div class="t" style="left:2744.70px;top:1076.10px;font-size:22.00px;line-height:22.00px;color:#1a1a1a;">-</div>
<div class="t" style="left:2913.70px;top:1076.10px;font-size:22.00px;line-height:22.00px;color:#1a1a1a;">-</div>
<div style="left:137.00px;top:1101.70px;width:1636.00px;height:26.70px;background:#fff06a;"></div>
<div style="left:945.90px;top:1100.40px;width:2.40px;height:28.00px;background:#ffffff;"></div>
<div style="left:1151.90px;top:1100.40px;width:2.40px;height:28.00px;background:#ffffff;"></div>
<div style="left:1357.90px;top:1100.40px;width:2.40px;height:28.00px;background:#ffffff;"></div>
<div style="left:1564.90px;top:1100.40px;width:2.40px;height:28.00px;background:#ffffff;"></div>
<div class="t" style="left:142.20px;top:1104.10px;font-size:22.00px;line-height:22.00px;color:#1a1a1a;">-</div>
<div class="t" style="left:1652.05px;top:1104.10px;font-size:22.00px;line-height:22.00px;color:#1a1a1a;">Yes</div>
<div class="t" style="left:1899.70px;top:1104.10px;font-size:22.00px;line-height:22.00px;color:#1a1a1a;">-</div>
<div class="t" style="left:2068.70px;top:1104.10px;font-size:22.00px;line-height:22.00px;color:#1a1a1a;">-</div>
<div class="t" style="left:2237.70px;top:1104.10px;font-size:22.00px;line-height:22.00px;color:#1a1a1a;">-</div>
<div class="t" style="left:2406.70px;top:1104.10px;font-size:22.00px;line-height:22.00px;color:#1a1a1a;">-</div>
<div class="t" style="left:2575.70px;top:1104.10px;font-size:22.00px;line-height:22.00px;color:#1a1a1a;">-</div>
<div class="t" style="left:2744.70px;top:1104.10px;font-size:22.00px;line-height:22.00px;color:#1a1a1a;">-</div>
<div class="t" style="left:2913.70px;top:1104.10px;font-size:22.00px;line-height:22.00px;color:#1a1a1a;">-</div>
<div style="left:137.00px;top:1129.70px;width:1636.00px;height:26.80px;background:#fff06a;"></div>
<div style="left:945.90px;top:1128.40px;width:2.40px;height:28.10px;background:#ffffff;"></div>
<div style="left:1151.90px;top:1128.40px;width:2.40px;height:28.10px;background:#ffffff;"></div>
<div style="left:1357.90px;top:1128.40px;width:2.40px;height:28.10px;background:#ffffff;"></div>
<div style="left:1564.90px;top:1128.40px;width:2.40px;height:28.10px;background:#ffffff;"></div>
<div class="t" style="left:142.20px;top:1132.20px;font-size:22.00px;line-height:22.00px;color:#1a1a1a;">-</div>
<div class="t" style="left:1652.05px;top:1132.20px;font-size:22.00px;line-height:22.00px;color:#1a1a1a;">Yes</div>
<div class="t" style="left:1899.70px;top:1132.20px;font-size:22.00px;line-height:22.00px;color:#1a1a1a;">-</div>
<div class="t" style="left:2068.70px;top:1132.20px;font-size:22.00px;line-height:22.00px;color:#1a1a1a;">-</div>
<div class="t" style="left:2237.70px;top:1132.20px;font-size:22.00px;line-height:22.00px;color:#1a1a1a;">-</div>
<div class="t" style="left:2406.70px;top:1132.20px;font-size:22.00px;line-height:22.00px;color:#1a1a1a;">-</div>
<div class="t" style="left:2575.70px;top:1132.20px;font-size:22.00px;line-height:22.00px;color:#1a1a1a;">-</div>
<div class="t" style="left:2744.70px;top:1132.20px;font-size:22.00px;line-height:22.00px;color:#1a1a1a;">-</div>
<div class="t" style="left:2913.70px;top:1132.20px;font-size:22.00px;line-height:22.00px;color:#1a1a1a;">-</div>
<div style="left:137.00px;top:1157.80px;width:1636.00px;height:26.70px;background:#fff06a;"></div>
<div style="left:945.90px;top:1156.50px;width:2.40px;height:28.00px;background:#ffffff;"></div>
<div style="left:1151.90px;top:1156.50px;width:2.40px;height:28.00px;background:#ffffff;"></div>
<div style="left:1357.90px;top:1156.50px;width:2.40px;height:28.00px;background:#ffffff;"></div>
<div style="left:1564.90px;top:1156.50px;width:2.40px;height:28.00px;background:#ffffff;"></div>
<div class="t" style="left:142.20px;top:1160.20px;font-size:22.00px;line-height:22.00px;color:#1a1a1a;">-</div>
<div class="t" style="left:1652.05px;top:1160.20px;font-size:22.00px;line-height:22.00px;color:#1a1a1a;">Yes</div>
<div class="t" style="left:1899.70px;top:1160.20px;font-size:22.00px;line-height:22.00px;color:#1a1a1a;">-</div>
<div class="t" style="left:2068.70px;top:1160.20px;font-size:22.00px;line-height:22.00px;color:#1a1a1a;">-</div>
<div class="t" style="left:2237.70px;top:1160.20px;font-size:22.00px;line-height:22.00px;color:#1a1a1a;">-</div>
<div class="t" style="left:2406.70px;top:1160.20px;font-size:22.00px;line-height:22.00px;color:#1a1a1a;">-</div>
<div class="t" style="left:2575.70px;top:1160.20px;font-size:22.00px;line-height:22.00px;color:#1a1a1a;">-</div>
<div class="t" style="left:2744.70px;top:1160.20px;font-size:22.00px;line-height:22.00px;color:#1a1a1a;">-</div>
<div class="t" style="left:2913.70px;top:1160.20px;font-size:22.00px;line-height:22.00px;color:#1a1a1a;">-</div>
<div style="left:137.00px;top:1185.80px;width:1636.00px;height:26.70px;background:#fff06a;"></div>
<div style="left:945.90px;top:1184.50px;width:2.40px;height:28.00px;background:#ffffff;"></div>
<div style="left:1151.90px;top:1184.50px;width:2.40px;height:28.00px;background:#ffffff;"></div>
<div style="left:1357.90px;top:1184.50px;width:2.40px;height:28.00px;background:#ffffff;"></div>
<div style="left:1564.90px;top:1184.50px;width:2.40px;height:28.00px;background:#ffffff;"></div>
<div class="t" style="left:142.20px;top:1188.20px;font-size:22.00px;line-height:22.00px;color:#1a1a1a;">-</div>
<div class="t" style="left:1652.05px;top:1188.20px;font-size:22.00px;line-height:22.00px;color:#1a1a1a;">Yes</div>
<div class="t" style="left:1899.70px;top:1188.20px;font-size:22.00px;line-height:22.00px;color:#1a1a1a;">-</div>
<div class="t" style="left:2068.70px;top:1188.20px;font-size:22.00px;line-height:22.00px;color:#1a1a1a;">-</div>
<div class="t" style="left:2237.70px;top:1188.20px;font-size:22.00px;line-height:22.00px;color:#1a1a1a;">-</div>
<div class="t" style="left:2406.70px;top:1188.20px;font-size:22.00px;line-height:22.00px;color:#1a1a1a;">-</div>
<div class="t" style="left:2575.70px;top:1188.20px;font-size:22.00px;line-height:22.00px;color:#1a1a1a;">-</div>
<div class="t" style="left:2744.70px;top:1188.20px;font-size:22.00px;line-height:22.00px;color:#1a1a1a;">-</div>
<div class="t" style="left:2913.70px;top:1188.20px;font-size:22.00px;line-height:22.00px;color:#1a1a1a;">-</div>
<div style="left:137.00px;top:1212.50px;width:2723.00px;height:35.00px;background:#4ab0e6;"></div>
<div class="t" style="left:143.00px;top:1215.01px;font-size:29.40px;line-height:29.40px;color:#fff;font-weight:bold;-webkit-text-stroke:0.76px #fff;letter-spacing:0.538px;">Total</div>
<div class="t" style="left:1426.80px;top:1218.72px;font-size:21.50px;line-height:21.50px;color:#fff;font-weight:bold;-webkit-text-stroke:0.56px #fff;letter-spacing:1.888px;">63,250,000</div>
<div class="t" style="left:1816.82px;top:1218.72px;font-size:21.50px;line-height:21.50px;color:#fff;font-weight:bold;-webkit-text-stroke:0.56px #fff;letter-spacing:1.853px;">1,666,667</div>
<div class="t" style="left:1985.82px;top:1218.72px;font-size:21.50px;line-height:21.50px;color:#fff;font-weight:bold;-webkit-text-stroke:0.56px #fff;letter-spacing:1.853px;">2,166,667</div>
<div class="t" style="left:2154.82px;top:1218.72px;font-size:21.50px;line-height:21.50px;color:#fff;font-weight:bold;-webkit-text-stroke:0.56px #fff;letter-spacing:1.853px;">2,166,667</div>
<div class="t" style="left:2323.82px;top:1218.72px;font-size:21.50px;line-height:21.50px;color:#fff;font-weight:bold;-webkit-text-stroke:0.56px #fff;letter-spacing:1.853px;">3,833,333</div>
<div class="t" style="left:2492.82px;top:1218.72px;font-size:21.50px;line-height:21.50px;color:#fff;font-weight:bold;-webkit-text-stroke:0.56px #fff;letter-spacing:1.853px;">3,833,333</div>
<div class="t" style="left:2661.82px;top:1218.72px;font-size:21.50px;line-height:21.50px;color:#fff;font-weight:bold;-webkit-text-stroke:0.56px #fff;letter-spacing:1.853px;">4,083,333</div>
<div class="t" style="left:2830.82px;top:1218.72px;font-size:21.50px;line-height:21.50px;color:#fff;font-weight:bold;-webkit-text-stroke:0.56px #fff;letter-spacing:1.853px;">5,783,333</div>
<div style="left:137.00px;top:1373.60px;width:2723.00px;height:27.80px;background:#4ab0e6;"></div>
<div style="left:137.00px;top:1457.50px;width:2723.00px;height:28.00px;background:#4ab0e6;"></div>
<div style="left:137.00px;top:1527.50px;width:2723.00px;height:27.50px;background:#4ab0e6;"></div>
<div style="left:137.00px;top:1583.00px;width:2723.00px;height:28.50px;background:#4ab0e6;"></div>
<div class="t" style="left:142.80px;top:1377.72px;font-size:21.50px;line-height:21.50px;color:#fff;font-weight:bold;-webkit-text-stroke:0.56px #fff;letter-spacing:0.825px;">Opening Net Book Value</div>
<div class="t" style="left:162.70px;top:1403.80px;font-size:22.00px;line-height:22.00px;color:#1a1a1a;letter-spacing:-0.080px;">Expenditure - Amortizable</div>
<div class="t" style="left:162.70px;top:1431.80px;font-size:22.00px;line-height:22.00px;color:#1a1a1a;">Depreciation (Depreciation Period (Years) - 10)</div>
<div class="t" style="left:142.80px;top:1461.72px;font-size:21.50px;line-height:21.50px;color:#fff;font-weight:bold;-webkit-text-stroke:0.56px #fff;letter-spacing:0.685px;">Closing Net Book Value</div>
<div class="t" style="left:142.80px;top:1531.72px;font-size:21.50px;line-height:21.50px;color:#fff;font-weight:bold;-webkit-text-stroke:0.56px #fff;letter-spacing:0.825px;">Opening Net Book Value</div>
<div class="t" style="left:162.70px;top:1557.80px;font-size:22.00px;line-height:22.00px;color:#1a1a1a;letter-spacing:-0.143px;">Expenditure - Non-Amortizable</div>
<div class="t" style="left:142.80px;top:1587.22px;font-size:21.50px;line-height:21.50px;color:#fff;font-weight:bold;-webkit-text-stroke:0.56px #fff;letter-spacing:0.685px;">Closing Net Book Value</div>
<div class="t" style="left:1730.70px;top:1405.00px;font-size:22.00px;line-height:22.00px;color:#1a1a1a;">-</div>
<div style="left:1722.40px;top:1470.70px;width:7.90px;height:3.80px;background:#fff;"></div>
<div style="left:1891.40px;top:1386.60px;width:7.90px;height:3.80px;background:#fff;"></div>
<div class="t" style="left:1832.43px;top:1405.00px;font-size:22.00px;line-height:22.00px;color:#1a1a1a;">1,666,667</div>
<div class="t" style="left:1863.01px;top:1433.20px;font-size:22.00px;line-height:22.00px;color:#1a1a1a;">13,889</div>
<div class="t" style="left:1816.82px;top:1461.62px;font-size:21.50px;line-height:21.50px;color:#fff;font-weight:bold;-webkit-text-stroke:0.56px #fff;letter-spacing:1.853px;">1,652,778</div>
<div style="left:1891.40px;top:1540.20px;width:7.90px;height:3.80px;background:#fff;"></div>
<div class="t" style="left:1899.70px;top:1558.70px;font-size:22.00px;line-height:22.00px;color:#1a1a1a;">-</div>
<div style="left:1891.40px;top:1596.70px;width:7.90px;height:3.80px;background:#fff;"></div>
<div class="t" style="left:1985.82px;top:1377.53px;font-size:21.50px;line-height:21.50px;color:#fff;font-weight:bold;-webkit-text-stroke:0.56px #fff;letter-spacing:1.853px;">1,652,778</div>
<div class="t" style="left:2001.43px;top:1405.00px;font-size:22.00px;line-height:22.00px;color:#1a1a1a;">2,166,667</div>
<div class="t" style="left:2032.01px;top:1433.20px;font-size:22.00px;line-height:22.00px;color:#1a1a1a;">31,944</div>
<div class="t" style="left:1985.82px;top:1461.62px;font-size:21.50px;line-height:21.50px;color:#fff;font-weight:bold;-webkit-text-stroke:0.56px #fff;letter-spacing:1.853px;">3,787,500</div>
<div style="left:2060.40px;top:1540.20px;width:7.90px;height:3.80px;background:#fff;"></div>
<div class="t" style="left:2068.70px;top:1558.70px;font-size:22.00px;line-height:22.00px;color:#1a1a1a;">-</div>
<div style="left:2060.40px;top:1596.70px;width:7.90px;height:3.80px;background:#fff;"></div>
<div class="t" style="left:2154.82px;top:1377.53px;font-size:21.50px;line-height:21.50px;color:#fff;font-weight:bold;-webkit-text-stroke:0.56px #fff;letter-spacing:1.853px;">3,787,500</div>
<div class="t" style="left:2170.43px;top:1405.00px;font-size:22.00px;line-height:22.00px;color:#1a1a1a;">2,166,667</div>
<div class="t" style="left:2201.01px;top:1433.20px;font-size:22.00px;line-height:22.00px;color:#1a1a1a;">50,000</div>
<div class="t" style="left:2154.82px;top:1461.62px;font-size:21.50px;line-height:21.50px;color:#fff;font-weight:bold;-webkit-text-stroke:0.56px #fff;letter-spacing:1.853px;">5,904,167</div>
<div style="left:2229.40px;top:1540.20px;width:7.90px;height:3.80px;background:#fff;"></div>
<div class="t" style="left:2237.70px;top:1558.70px;font-size:22.00px;line-height:22.00px;color:#1a1a1a;">-</div>
<div style="left:2229.40px;top:1596.70px;width:7.90px;height:3.80px;background:#fff;"></div>
<div class="t" style="left:2323.82px;top:1377.53px;font-size:21.50px;line-height:21.50px;color:#fff;font-weight:bold;-webkit-text-stroke:0.56px #fff;letter-spacing:1.853px;">5,904,167</div>
<div class="t" style="left:2339.43px;top:1405.00px;font-size:22.00px;line-height:22.00px;color:#1a1a1a;">3,833,333</div>
<div class="t" style="left:2370.01px;top:1433.20px;font-size:22.00px;line-height:22.00px;color:#1a1a1a;">81,944</div>
<div class="t" style="left:2323.82px;top:1461.62px;font-size:21.50px;line-height:21.50px;color:#fff;font-weight:bold;-webkit-text-stroke:0.56px #fff;letter-spacing:1.853px;">9,655,556</div>
<div style="left:2398.40px;top:1540.20px;width:7.90px;height:3.80px;background:#fff;"></div>
<div class="t" style="left:2406.70px;top:1558.70px;font-size:22.00px;line-height:22.00px;color:#1a1a1a;">-</div>
<div style="left:2398.40px;top:1596.70px;width:7.90px;height:3.80px;background:#fff;"></div>
<div class="t" style="left:2492.82px;top:1377.53px;font-size:21.50px;line-height:21.50px;color:#fff;font-weight:bold;-webkit-text-stroke:0.56px #fff;letter-spacing:1.853px;">9,655,556</div>
<div class="t" style="left:2508.43px;top:1405.00px;font-size:22.00px;line-height:22.00px;color:#1a1a1a;">3,833,333</div>
<div class="t" style="left:2528.41px;top:1433.20px;font-size:22.00px;line-height:22.00px;color:#1a1a1a;">113,889</div>
<div class="t" style="left:2479.01px;top:1461.62px;font-size:21.50px;line-height:21.50px;color:#fff;font-weight:bold;-webkit-text-stroke:0.56px #fff;letter-spacing:1.853px;">13,375,000</div>
<div style="left:2567.40px;top:1540.20px;width:7.90px;height:3.80px;background:#fff;"></div>
<div class="t" style="left:2575.70px;top:1558.70px;font-size:22.00px;line-height:22.00px;color:#1a1a1a;">-</div>
<div style="left:2567.40px;top:1596.70px;width:7.90px;height:3.80px;background:#fff;"></div>
<div class="t" style="left:2648.01px;top:1377.53px;font-size:21.50px;line-height:21.50px;color:#fff;font-weight:bold;-webkit-text-stroke:0.56px #fff;letter-spacing:1.853px;">13,375,000</div>
<div class="t" style="left:2677.43px;top:1405.00px;font-size:22.00px;line-height:22.00px;color:#1a1a1a;">4,083,333</div>
<div class="t" style="left:2695.77px;top:1433.20px;font-size:22.00px;line-height:22.00px;color:#1a1a1a;">147,917</div>
<div class="t" style="left:2648.01px;top:1461.62px;font-size:21.50px;line-height:21.50px;color:#fff;font-weight:bold;-webkit-text-stroke:0.56px #fff;letter-spacing:1.853px;">17,310,417</div>
<div style="left:2736.40px;top:1540.20px;width:7.90px;height:3.80px;background:#fff;"></div>
<div class="t" style="left:2744.70px;top:1558.70px;font-size:22.00px;line-height:22.00px;color:#1a1a1a;">-</div>
<div style="left:2736.40px;top:1596.70px;width:7.90px;height:3.80px;background:#fff;"></div>
<div class="t" style="left:2817.01px;top:1377.53px;font-size:21.50px;line-height:21.50px;color:#fff;font-weight:bold;-webkit-text-stroke:0.56px #fff;letter-spacing:1.853px;">17,310,417</div>
<div class="t" style="left:2846.43px;top:1405.00px;font-size:22.00px;line-height:22.00px;color:#1a1a1a;">5,783,333</div>
<div class="t" style="left:2868.04px;top:1433.20px;font-size:22.00px;line-height:22.00px;color:#1a1a1a;">196,111</div>
<div class="t" style="left:2817.01px;top:1461.62px;font-size:21.50px;line-height:21.50px;color:#fff;font-weight:bold;-webkit-text-stroke:0.56px #fff;letter-spacing:1.853px;">22,897,639</div>
<div style="left:2905.40px;top:1540.20px;width:7.90px;height:3.80px;background:#fff;"></div>
<div class="t" style="left:2913.70px;top:1558.70px;font-size:22.00px;line-height:22.00px;color:#1a1a1a;">-</div>
<div style="left:2905.40px;top:1596.70px;width:7.90px;height:3.80px;background:#fff;"></div>
<div style="left:1773.00px;top:305.00px;width:1.00px;height:1365.00px;background:#a6a6a6;"></div>
</div>
<div style="left:2860.00px;top:278.00px;width:30.00px;height:1392.00px;background:#161616;"></div>
<svg style="left:2867.00px;top:284.00px;" width="18" height="12" viewBox="0 0 18 12"><path d="M9 1 L16.5 10.5 H1.5 Z" fill="#a0a0a0" stroke="#a0a0a0" stroke-width="1.5" stroke-linejoin="round"/></svg>
<div style="left:2869.5px;top:304px;width:12px;height:1311px;border-radius:6px;background:#9a9a9a"></div>
<svg style="left:2867.00px;top:1653.00px;" width="18" height="12" viewBox="0 0 18 12"><path d="M9 11 L16.5 1.5 H1.5 Z" fill="#a0a0a0" stroke="#a0a0a0" stroke-width="1.5" stroke-linejoin="round"/></svg>
<div style="left:11.00px;top:1670.00px;width:2879.00px;height:48.00px;background:#0b0b0b;"></div>
<div style="left:11.00px;top:1718.00px;width:2879.00px;height:33.00px;background:#141414;"></div>
<div style="left:11.00px;top:1718.00px;width:2879.00px;height:1.00px;background:#2c2c2c;"></div>
<svg style="left:45.00px;top:1685.00px;" width="12" height="16" viewBox="0 0 12 16"><path d="M9.5 1.5 L2.5 8 L9.5 14.5" fill="none" stroke="#a8a8a8" stroke-width="1.6"/></svg>
<svg style="left:93.00px;top:1685.00px;" width="12" height="16" viewBox="0 0 12 16"><path d="M2.5 1.5 L9.5 8 L2.5 14.5" fill="none" stroke="#a8a8a8" stroke-width="1.6"/></svg>
<div class="t" style="left:190.70px;top:1684.89px;font-size:20.60px;line-height:20.60px;color:#f2f2f2;letter-spacing:-0.093px;">Contents</div>
<div style="left:299px;top:1676px;width:127.6px;height:36px;border-radius:8px;background:#ffef66"></div>
<div class="t" style="left:313.80px;top:1684.89px;font-size:20.60px;line-height:20.60px;color:#141414;letter-spacing:-0.085px;">Dashboard</div>
<div style="left:440.4px;top:1676px;width:105.2px;height:36px;border-radius:8px;background:#ffef66"></div>
<div class="t" style="left:454.60px;top:1684.89px;font-size:20.60px;line-height:20.60px;color:#141414;letter-spacing:-0.810px;">Revenue</div>
<div style="left:559px;top:1676px;width:78.4px;height:36px;border-radius:8px;background:#ffef66"></div>
<div class="t" style="left:571.20px;top:1684.89px;font-size:20.60px;line-height:20.60px;color:#141414;letter-spacing:-2.421px;">COGS</div>
<div style="left:650.9px;top:1676px;width:75.5px;height:36px;border-radius:8px;background:#ffef66"></div>
<div class="t" style="left:664.00px;top:1684.89px;font-size:20.60px;line-height:20.60px;color:#141414;letter-spacing:-2.315px;">OPEX</div>
<div style="left:739.8px;top:1676px;width:88.7px;height:36px;border-radius:8px;background:#ffef66"></div>
<div class="t" style="left:753.60px;top:1684.89px;font-size:20.60px;line-height:20.60px;color:#141414;letter-spacing:-0.312px;">Payroll</div>
<div style="left:942px;top:1676px;width:112.9px;height:36px;border-radius:8px;background:#ffef66"></div>
<div class="t" style="left:955.50px;top:1684.89px;font-size:20.60px;line-height:20.60px;color:#141414;letter-spacing:-0.306px;">CapTable</div>
<div style="left:1068px;top:1676px;width:89.7px;height:36px;border-radius:8px;background:#ffef66"></div>
<div class="t" style="left:1081.00px;top:1684.89px;font-size:20.60px;line-height:20.60px;color:#141414;letter-spacing:-0.088px;">Capital</div>
<div style="left:1170.8px;top:1676px;width:42.1px;height:36px;border-radius:8px;background:#4db3ea"></div>
<div class="t" style="left:1185.30px;top:1684.89px;font-size:20.60px;line-height:20.60px;color:#141414;">IS</div>
<div style="left:1226px;top:1676px;width:47.9px;height:36px;border-radius:8px;background:#4db3ea"></div>
<div class="t" style="left:1239.00px;top:1684.89px;font-size:20.60px;line-height:20.60px;color:#141414;">CF</div>
<div style="left:1287px;top:1676px;width:47.6px;height:36px;border-radius:8px;background:#4db3ea"></div>
<div class="t" style="left:1300.80px;top:1684.89px;font-size:20.60px;line-height:20.60px;color:#141414;">BS</div>
<div style="left:1348px;top:1676px;width:115.0px;height:36px;border-radius:8px;background:#4db3ea"></div>
<div class="t" style="left:1361.00px;top:1684.89px;font-size:20.60px;line-height:20.60px;color:#141414;letter-spacing:-0.576px;">Scenarios</div>
<div style="left:1476px;top:1676px;width:114.6px;height:36px;border-radius:8px;background:#4db3ea"></div>
<div class="t" style="left:1489.50px;top:1684.89px;font-size:20.60px;line-height:20.60px;color:#141414;letter-spacing:0.266px;">Valuation</div>
<div style="left:1603.7px;top:1676px;width:114.2px;height:36px;border-radius:8px;background:#4db3ea"></div>
<div class="t" style="left:1618.00px;top:1684.89px;font-size:20.60px;line-height:20.60px;color:#141414;letter-spacing:-0.240px;">Summary</div>
<div style="left:1730.6px;top:1676px;width:47.9px;height:36px;border-radius:8px;background:#4db3ea"></div>
<div class="t" style="left:1744.00px;top:1684.89px;font-size:20.60px;line-height:20.60px;color:#141414;">BE</div>
<div style="left:1792px;top:1676px;width:72.0px;height:36px;border-radius:8px;background:#4db3ea"></div>
<div class="t" style="left:1805.40px;top:1684.89px;font-size:20.60px;line-height:20.60px;color:#141414;letter-spacing:-1.967px;">ROIC</div>
<div style="left:1877px;top:1676px;width:84.3px;height:36px;border-radius:8px;background:#4db3ea"></div>
<div class="t" style="left:1890.30px;top:1684.89px;font-size:20.60px;line-height:20.60px;color:#141414;letter-spacing:-0.535px;">Charts</div>
<div style="left:1975px;top:1676px;width:63.5px;height:36px;border-radius:8px;background:#4db3ea"></div>
<div class="t" style="left:1988.60px;top:1684.89px;font-size:20.60px;line-height:20.60px;color:#141414;letter-spacing:-2.168px;">KPIs</div>
<div style="left:2052px;top:1676px;width:20px;height:36px;border-radius:8px 0 0 8px;background:#4db3ea;overflow:hidden"><div class="t" style="left:12px;top:8.89px;font-size:20.6px;line-height:20.6px;color:#141414">S</div></div>
<div style="left:292.00px;top:1680.00px;width:1.00px;height:28.00px;background:#5a5a5a;"></div>
<div style="left:433.50px;top:1680.00px;width:1.00px;height:28.00px;background:#5a5a5a;"></div>
<div style="left:552.50px;top:1680.00px;width:1.00px;height:28.00px;background:#5a5a5a;"></div>
<div style="left:644.00px;top:1680.00px;width:1.00px;height:28.00px;background:#5a5a5a;"></div>
<div style="left:733.00px;top:1680.00px;width:1.00px;height:28.00px;background:#5a5a5a;"></div>
<div style="left:835.40px;top:1680.00px;width:1.00px;height:28.00px;background:#5a5a5a;"></div>
<div style="left:935.40px;top:1680.00px;width:1.00px;height:28.00px;background:#5a5a5a;"></div>
<div style="left:1061.80px;top:1680.00px;width:1.00px;height:28.00px;background:#5a5a5a;"></div>
<div style="left:1164.60px;top:1680.00px;width:1.00px;height:28.00px;background:#5a5a5a;"></div>
<div style="left:1219.00px;top:1680.00px;width:1.00px;height:28.00px;background:#5a5a5a;"></div>
<div style="left:1280.80px;top:1680.00px;width:1.00px;height:28.00px;background:#5a5a5a;"></div>
<div style="left:1341.50px;top:1680.00px;width:1.00px;height:28.00px;background:#5a5a5a;"></div>
<div style="left:1469.80px;top:1680.00px;width:1.00px;height:28.00px;background:#5a5a5a;"></div>
<div style="left:1597.50px;top:1680.00px;width:1.00px;height:28.00px;background:#5a5a5a;"></div>
<div style="left:1724.80px;top:1680.00px;width:1.00px;height:28.00px;background:#5a5a5a;"></div>
<div style="left:1785.70px;top:1680.00px;width:1.00px;height:28.00px;background:#5a5a5a;"></div>
<div style="left:1871.00px;top:1680.00px;width:1.00px;height:28.00px;background:#5a5a5a;"></div>
<div style="left:1968.50px;top:1680.00px;width:1.00px;height:28.00px;background:#5a5a5a;"></div>
<div style="left:2045.70px;top:1680.00px;width:1.00px;height:28.00px;background:#5a5a5a;"></div>
<div style="left:834.50px;top:1670.00px;width:7.00px;height:7.00px;background:#ffffff;"></div>
<div style="left:834.5px;top:1670px;width:7px;height:7px;border-top-right-radius:7px;background:#0b0b0b"></div>
<div style="left:929.50px;top:1670.00px;width:7.00px;height:7.00px;background:#ffffff;"></div>
<div style="left:929.5px;top:1670px;width:7px;height:7px;border-top-left-radius:7px;background:#0b0b0b"></div>
<div style="left:841.5px;top:1668px;width:88px;height:44px;border-radius:0 0 7px 7px;background:linear-gradient(#ffffff,#fdf8d8)"></div>
<div class="t" style="left:855.00px;top:1680.87px;font-size:19.80px;line-height:19.80px;color:#1e1e1e;letter-spacing:-1.282px;">CAPEX</div>
<div style="left:854.00px;top:1705.00px;width:63.00px;height:3.00px;background:#1e7a44;"></div>
<svg style="left:2085.00px;top:1689.00px;" width="21" height="8" viewBox="0 0 21 8"><circle cx="4" cy="4" r="2.3" fill="#e0e0e0"/><circle cx="10.4" cy="4" r="2.3" fill="#e0e0e0"/><circle cx="16.8" cy="4" r="2.3" fill="#e0e0e0"/></svg>
<svg style="left:2134.00px;top:1683.00px;" width="19" height="19" viewBox="0 0 19 19"><path d="M9.5 1 V18 M1 9.5 H18" stroke="#e6e6e6" stroke-width="1.7"/></svg>
<svg style="left:2188.00px;top:1686.00px;" width="8" height="17" viewBox="0 0 8 17"><rect x="1.5" y="0.5" width="4" height="3.8" fill="#e6e6e6"/><rect x="1.5" y="6.5" width="4" height="3.8" fill="#e6e6e6"/><rect x="1.5" y="12.5" width="4" height="3.8" fill="#e6e6e6"/></svg>
<div style="left:2217px;top:1680px;width:642px;height:26px;border-radius:13px;background:#171717"></div>
<svg style="left:2223.00px;top:1686.00px;" width="12" height="14" viewBox="0 0 12 14"><path d="M10.5 1 V13 L1.5 7 Z" fill="#9a9a9a" stroke="#9a9a9a" stroke-width="1.2" stroke-linejoin="round"/></svg>
<div style="left:2242px;top:1687px;width:55px;height:12px;border-radius:6px;background:#9a9a9a"></div>
<svg style="left:2842.00px;top:1687.00px;" width="12" height="14" viewBox="0 0 12 14"><path d="M1.5 1 V13 L10.5 7 Z" fill="#9a9a9a" stroke="#9a9a9a" stroke-width="1.2" stroke-linejoin="round"/></svg>
<div class="t" style="left:27.40px;top:1727.60px;font-size:16.00px;line-height:16.00px;color:#ededed;letter-spacing:-0.988px;">Ready</div>
<svg style="left:98.00px;top:1725.00px;" width="24" height="22" viewBox="0 0 24 22">
<rect x="1" y="1.2" width="20" height="18" fill="none" stroke="#e6e6e6" stroke-width="1.4"/>
<path d="M1 4.5 H21 M3.5 8 H8 M3.5 11.5 H7 M3.5 15 H7" stroke="#e6e6e6" stroke-width="1.3"/>
<circle cx="15.5" cy="14.8" r="5.8" fill="#141414" stroke="#e6e6e6" stroke-width="1.4"/><circle cx="15.5" cy="14.8" r="2.3" fill="#e6e6e6"/>
</svg>
<svg style="left:145.00px;top:1723.00px;" width="24" height="24" viewBox="0 0 24 24">
<circle cx="10" cy="3.6" r="2.6" fill="none" stroke="#e6e6e6" stroke-width="1.5"/>
<path d="M2.5 6 Q5 9.5 10 9.5 Q15 9.5 17.5 6 M10 9.5 V14.5 Q7 17 4 22.5 M10 14.5 L12.5 17" fill="none" stroke="#e6e6e6" stroke-width="1.6" stroke-linecap="round"/>
<path d="M14 16 L22 23.5 M22 16 L14 23.5" stroke="#e6e6e6" stroke-width="1.5"/>
</svg>
<div class="t" style="left:173.50px;top:1727.77px;font-size:16.50px;line-height:16.50px;color:#ededed;font-weight:bold;letter-spacing:-0.411px;">Accessibility: Investigate</div>
<div style="left:2445.00px;top:1720.00px;width:59.00px;height:31.00px;background:#232323;"></div>
<svg style="left:2463.00px;top:1724.00px;" width="22" height="22" viewBox="0 0 22 22"><path d="M1.5 1.5 H20.5 V20.5 H1.5 Z M7.8 1.5 V20.5 M14.2 1.5 V20.5 M1.5 7.8 H20.5 M1.5 14.2 H20.5" fill="none" stroke="#e6e6e6" stroke-width="1.6"/></svg>
<svg style="left:2523.00px;top:1724.00px;" width="23" height="22" viewBox="0 0 23 22"><rect x="1.2" y="1.2" width="20.5" height="19.6" fill="none" stroke="#e6e6e6" stroke-width="1.6"/><rect x="5" y="4.5" width="13" height="13" fill="none" stroke="#e6e6e6" stroke-width="1.4"/><path d="M7.5 8 H15.5 M7.5 11 H15.5 M7.5 14 H15.5" stroke="#e6e6e6" stroke-width="1.2"/></svg>
<svg style="left:2583.00px;top:1724.00px;" width="23" height="22" viewBox="0 0 23 22"><rect x="1.2" y="1.2" width="20.5" height="19.6" fill="none" stroke="#e6e6e6" stroke-width="1.6"/><path d="M5 1.2 V11 H18 V1.2 M11.5 1.2 V11" fill="none" stroke="#e6e6e6" stroke-width="1.5"/></svg>
<div style="left:2632.00px;top:1734.20px;width:13.00px;height:1.60px;background:#dcdcdc;"></div>
<div style="left:2653.00px;top:1734.50px;width:148.00px;height:1.20px;background:#9a9a9a;"></div>
<div style="left:2727.00px;top:1730.00px;width:1.50px;height:10.00px;background:#9a9a9a;"></div>
<div style="left:2733.00px;top:1727.50px;width:6.50px;height:15.00px;background:#a6a6a6;"></div>
<svg style="left:2807.00px;top:1727.00px;" width="16" height="16" viewBox="0 0 16 16"><path d="M8 1 V15 M1 8 H15" stroke="#dcdcdc" stroke-width="1.5"/></svg>
<div class="t" style="left:2840.50px;top:1727.00px;font-size:16.00px;line-height:16.00px;color:#ededed;letter-spacing:-1.008px;">140%</div>
</body></html>
